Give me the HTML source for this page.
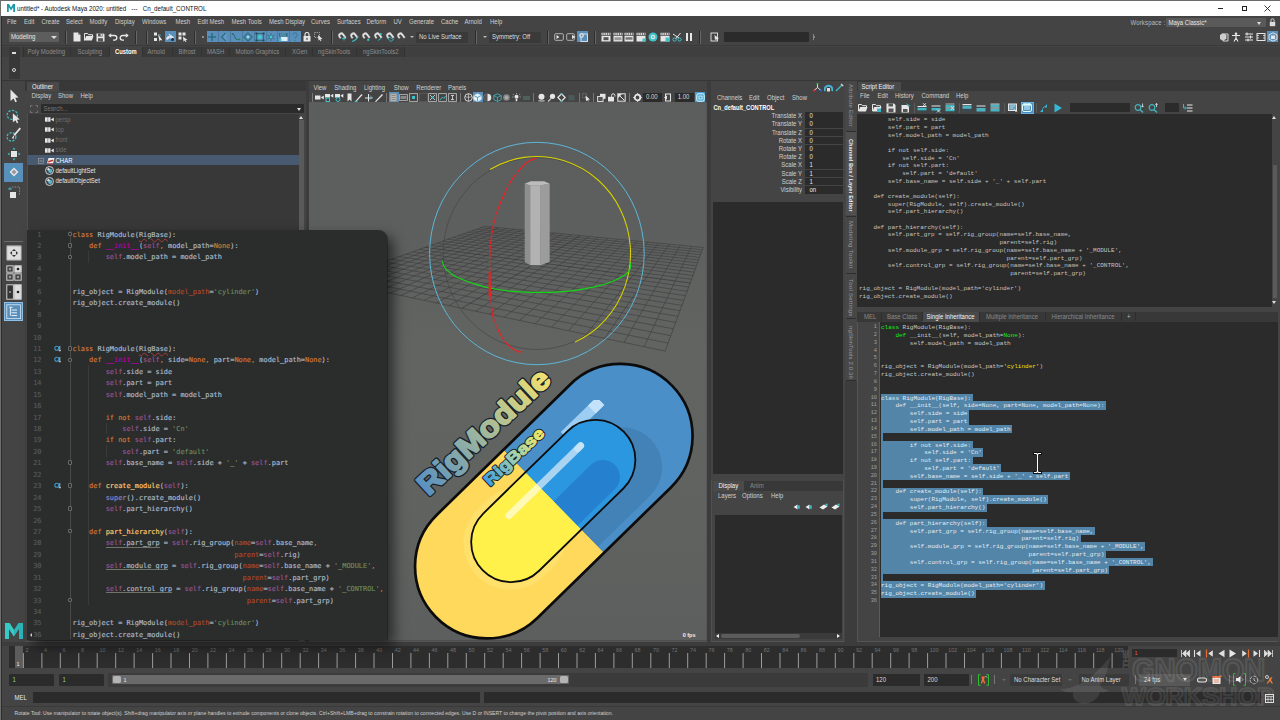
<!DOCTYPE html>
<html lang="en">
<head>
<meta charset="utf-8">
<title>untitled* - Autodesk Maya 2020: untitled --- Cn_default_CONTROL</title>
<style>
*{box-sizing:border-box;margin:0;padding:0}
html,body{width:1280px;height:720px;overflow:hidden;background:#444}
body{font-family:"Liberation Sans",sans-serif;font-size:6px;color:#d0d0d0;position:relative;-webkit-font-smoothing:antialiased}
.abs,.abs>*{position:absolute}
.a{position:absolute}
.t{position:absolute;white-space:pre;line-height:10px;height:10px;transform:scaleY(1.13);transform-origin:0 50%}
.dim{color:#8a8a8a}
.fld{position:absolute;background:#2b2b2b;border-radius:1px}
.sep{position:absolute;width:1px;background:#2a2a2a;box-shadow:1px 0 0 #5a5a5a}
.ic{position:absolute;width:11px;height:11px}
.mono{font-family:"Liberation Mono",monospace}
.pc{font-family:"DejaVu Sans Mono","Liberation Mono",monospace;-webkit-text-stroke:.18px}
</style>
</head>
<body>
<div class="a" style="left:0;top:0;width:1280px;height:16px;background:#fff"></div>
<div class="a" style="left:0;top:0;width:1280px;height:1px;background:#6b6b6b"></div>
<div class="a" style="left:0;top:0;width:1.400px;height:720px;background:#6e6e6e;z-index:50"></div>
<div class="a" style="left:1.400px;top:16px;width:1px;height:704px;background:#2c2c2c;z-index:50"></div>
<svg class="a" style="left:7px;top:4px" width="8" height="8" viewBox="0 0 8 8"><path d="M0 0h2l2 3.4L6 0h2v8H6.2V3.2L4 6.6 1.8 3.2V8H0z" fill="#1c9aa8"/></svg>
<div class="t" style="left:17px;top:3.900px;color:#111;font-size:7px;transform:scaleX(.885);transform-origin:0 0">untitled* - Autodesk Maya 2020: untitled&nbsp;&nbsp;&nbsp;---&nbsp;&nbsp;&nbsp;Cn_default_CONTROL</div>
<div class="a" style="left:1218px;top:8px;width:5px;height:1px;background:#222"></div>
<div class="a" style="left:1241.500px;top:5.500px;width:5.500px;height:5.500px;border:.8px solid #222"></div>
<svg class="a" style="left:1263.500px;top:4.500px" width="7" height="7" viewBox="0 0 7 7"><path d="M.5 .5l6 6M6.500 .5l-6 6" stroke="#222" stroke-width=".9" fill="none"/></svg>
<div class="t" style="left:7px;top:16.8px">File</div>
<div class="t" style="left:24px;top:16.8px">Edit</div>
<div class="t" style="left:41.5px;top:16.8px">Create</div>
<div class="t" style="left:66px;top:16.8px">Select</div>
<div class="t" style="left:89.5px;top:16.8px">Modify</div>
<div class="t" style="left:115px;top:16.8px">Display</div>
<div class="t" style="left:142px;top:16.8px">Windows</div>
<div class="t" style="left:175.5px;top:16.8px">Mesh</div>
<div class="t" style="left:197.5px;top:16.8px">Edit Mesh</div>
<div class="t" style="left:231.5px;top:16.8px">Mesh Tools</div>
<div class="t" style="left:269px;top:16.8px">Mesh Display</div>
<div class="t" style="left:311px;top:16.8px">Curves</div>
<div class="t" style="left:337px;top:16.8px">Surfaces</div>
<div class="t" style="left:366.5px;top:16.8px">Deform</div>
<div class="t" style="left:393.5px;top:16.8px">UV</div>
<div class="t" style="left:409px;top:16.8px">Generate</div>
<div class="t" style="left:441px;top:16.8px">Cache</div>
<div class="t" style="left:464.5px;top:16.8px">Arnold</div>
<div class="t" style="left:490px;top:16.8px">Help</div>
<div class="t" style="left:1130.500px;top:17.800px;color:#bbb;letter-spacing:.15px">Workspace :</div>
<div class="fld" style="left:1166px;top:18.200px;width:99.500px;height:9.300px;background:#5a5a5a"></div>
<div class="t" style="left:1168.500px;top:17.900px;color:#e8e8e8">Maya Classic*</div>
<div class="a" style="left:1257px;top:22px;border:2.600px solid transparent;border-top:3.5px solid #ddd"></div>
<svg class="a" style="left:1268.500px;top:18.200px" width="7" height="8.600" viewBox="0 0 9 11"><rect x="1" y="5" width="7" height="5.5" fill="#ddd"/><path d="M2.5 5V3a2 2 0 014 0v2" stroke="#ddd" stroke-width="1.2" fill="none"/></svg>
<div class="fld" style="left:9px;top:32px;width:50px;height:10px;background:#5d5d5d"></div>
<div class="t" style="left:11px;top:32px;color:#e8e8e8">Modeling</div>
<div class="a" style="left:50.5px;top:35.5px;border:3px solid transparent;border-top:3.5px solid #ddd"></div>
<div class="a" style="left:65px;top:31px;width:1px;height:13px;background:#2c2c2c"></div><div class="a" style="left:66px;top:31px;width:1px;height:13px;background:#666"></div>
<svg class="a" style="left:72.5px;top:32.0px" width="8" height="10" viewBox="0 0 8 10"><path d="M.5 .5h4.5l2.5 2.5v6.5h-7z" fill="#e6e6e6"/><path d="M5 .5v2.5h2.5" fill="#999"/></svg>
<svg class="a" style="left:83.5px;top:33.0px" width="10" height="8" viewBox="0 0 10 8"><path d="M.5 7.5v-7h3l1 1.2h4v1.3" fill="none" stroke="#e6e6e6" stroke-width="1"/><path d="M.5 7.5l1.6-4.5h7.4l-1.6 4.5z" fill="#e6e6e6"/></svg>
<svg class="a" style="left:96.0px;top:32.5px" width="9" height="9" viewBox="0 0 9 9"><path d="M.5 .5h7l1 1v7h-8z" fill="#e6e6e6"/><rect x="2" y=".5" width="4.5" height="3" fill="#555"/><rect x="4.6" y="1" width="1.2" height="2" fill="#e6e6e6"/><rect x="2" y="5.2" width="5" height="3.3" fill="#555"/></svg>
<svg class="a" style="left:107.5px;top:33.0px" width="10" height="8" viewBox="0 0 10 8"><path d="M1 2.5h5.5a2.3 2.3 0 010 4.6h-1.5" fill="none" stroke="#e6e6e6" stroke-width="1.4"/><path d="M3.2 .3L.3 2.5l2.9 2.2z" fill="#e6e6e6"/></svg>
<svg class="a" style="left:119.0px;top:33.0px" width="10" height="8" viewBox="0 0 10 8"><path d="M9 2.5h-5.500a2.3 2.3 0 000 4.6h1.5" fill="none" stroke="#e6e6e6" stroke-width="1.4"/><path d="M6.800 .3l2.9 2.2-2.900 2.200z" fill="#e6e6e6"/></svg>
<div class="a" style="left:134.5px;top:31px;width:1px;height:13px;background:#2c2c2c"></div><div class="a" style="left:135.5px;top:31px;width:1px;height:13px;background:#666"></div>
<div class="a" style="left:146px;top:31px;width:1px;height:13px;background:#2c2c2c"></div><div class="a" style="left:147px;top:31px;width:1px;height:13px;background:#666"></div>
<svg class="a" style="left:152.5px;top:32.0px" width="10" height="10" viewBox="0 0 10 10"><rect x="1" y=".5" width="3" height="3" fill="#e6e6e6"/><rect x="1" y="6" width="3" height="3" fill="#e6e6e6"/><path d="M5 2l4.500 6.500-2-.4-.9 1.700z" fill="#e6e6e6"/><path d="M5.500 2.500l2.500 1" stroke="#3fc1c9" stroke-width=".8"/></svg>
<div class="a" style="left:164.5px;top:31.3px;width:11.5px;height:11px;background:#5a8fbc"></div>
<svg class="a" style="left:165.2px;top:32.0px" width="10" height="10" viewBox="0 0 10 10"><path d="M2 8a2.200 2.200 0 113.500-2.600z" fill="#e6e6e6"/><path d="M3.500 1.500l3 7 .6-2.500 2.400-.6z" fill="#e6e6e6"/><circle cx="7.500" cy="7.500" r="1.500" fill="#2b2b2b"/></svg>
<svg class="a" style="left:177.5px;top:32.0px" width="10" height="10" viewBox="0 0 10 10"><rect x=".5" y=".5" width="3" height="3" fill="#e6e6e6"/><rect x="4.500" y=".5" width="3" height="3" fill="#e6e6e6"/><rect x=".5" y="4.500" width="3" height="3" fill="#e6e6e6"/><path d="M5 4.500l4.500 3.500-2 .2.900 1.700-.8.300-.9-1.700-1.200 1.300z" fill="#e6e6e6"/></svg>
<div class="a" style="left:193.5px;top:31px;width:1px;height:13px;background:#2c2c2c"></div><div class="a" style="left:194.5px;top:31px;width:1px;height:13px;background:#666"></div>
<div class="a" style="left:201.5px;top:36px;width:2px;height:2px;border-radius:1px;background:#aaa"></div>
<div class="a" style="left:206.5px;top:31.3px;width:94.3px;height:11px;background:#5a8fbc"></div>
<svg class="a" style="left:207.4px;top:32.0px" width="10" height="10" viewBox="0 0 10 10"><path d="M1 5h8M5 1v8" stroke="#2b6f80" stroke-width="1.500"/></svg>
<div class="a" style="left:218.3px;top:31.3px;width:.6px;height:11px;background:#4a7a9f"></div>
<svg class="a" style="left:219.2px;top:32.0px" width="10" height="10" viewBox="0 0 10 10"><path d="M6.500 1l-4 4 4 4" stroke="#2b6f80" stroke-width="1.100" fill="none"/><path d="M7.500 2.500l-2 2.500 2 2.500" stroke="#7fb0d0" stroke-width=".8" fill="none"/></svg>
<div class="a" style="left:230.1px;top:31.3px;width:.6px;height:11px;background:#4a7a9f"></div>
<svg class="a" style="left:231.0px;top:32.0px" width="10" height="10" viewBox="0 0 10 10"><path d="M1.500 2c3 0 1.500 5.500 4.500 5.500h2.500" stroke="#2b6f80" stroke-width="1.100" fill="none"/><rect x=".8" y="1.200" width="1.800" height="1.800" fill="#2b6f80"/><rect x="7.500" y="6.500" width="1.800" height="1.800" fill="#2a8a3a"/></svg>
<div class="a" style="left:241.9px;top:31.3px;width:.6px;height:11px;background:#4a7a9f"></div>
<svg class="a" style="left:242.8px;top:32.0px" width="10" height="10" viewBox="0 0 10 10"><path d="M5 .8l4.200 4.200-4.200 4.200-4.200-4.200z" fill="none" stroke="#2b6f80" stroke-width="1.100"/><circle cx="5" cy="5" r="1.300" fill="#9fe0e0"/></svg>
<div class="a" style="left:253.7px;top:31.3px;width:.6px;height:11px;background:#4a7a9f"></div>
<svg class="a" style="left:254.6px;top:32.0px" width="10" height="10" viewBox="0 0 10 10"><rect x="1.500" y="1.500" width="7" height="7" fill="none" stroke="#2b6f80" stroke-width="1"/><circle cx="5" cy="5" r="2" fill="#3fd0d0"/><rect x=".5" y=".5" width="2" height="2" fill="#2a4a5a"/><rect x="7.500" y=".5" width="2" height="2" fill="#2a4a5a"/><rect x=".5" y="7.500" width="2" height="2" fill="#2a4a5a"/><rect x="7.500" y="7.500" width="2" height="2" fill="#2a4a5a"/></svg>
<div class="a" style="left:265.5px;top:31.3px;width:.6px;height:11px;background:#4a7a9f"></div>
<svg class="a" style="left:266.4px;top:32.0px" width="10" height="10" viewBox="0 0 10 10"><path d="M5 1v8M1.500 3l7 4M8.500 3l-7 4" stroke="#2b6f80" stroke-width=".9"/><circle cx="5" cy="5" r="1.200" fill="#3fd0d0"/></svg>
<div class="a" style="left:277.3px;top:31.3px;width:.6px;height:11px;background:#4a7a9f"></div>
<svg class="a" style="left:278.2px;top:32.0px" width="10" height="10" viewBox="0 0 10 10"><rect x="1" y="1" width="8.500" height="3.500" fill="#2b6f80"/><path d="M3 1v3.500M5 1v3.500M7 1v3.500" stroke="#8fc0dd" stroke-width=".7"/><rect x="3" y="5" width="6.500" height="4" fill="#dfeff5"/><circle cx="2.500" cy="8" r="1.300" fill="#3fd0d0"/></svg>
<div class="a" style="left:289.1px;top:31.3px;width:.6px;height:11px;background:#4a7a9f"></div>
<svg class="a" style="left:290.0px;top:32.0px" width="10" height="10" viewBox="0 0 10 10"><path d="M3 3.200a2.100 2.100 0 114 .6c-.5 1-2 1.200-2 2.700" stroke="#3a7f9f" stroke-width="1.200" fill="none"/><rect x="4.400" y="7.800" width="1.300" height="1.300" fill="#3a7f9f"/></svg>
<svg class="a" style="left:302.8px;top:32.0px" width="8" height="10" viewBox="0 0 8 10"><rect x=".5" y="4" width="7" height="5.500" rx=".5" fill="#e6e6e6"/><path d="M2 4.200v-1.700a2 2 0 014 0v1.700" fill="none" stroke="#e6e6e6" stroke-width="1.200"/><rect x="3.400" y="5.800" width="1.200" height="2" fill="#444"/></svg>
<svg class="a" style="left:313.8px;top:32.0px" width="10" height="10" viewBox="0 0 10 10"><rect x=".5" y=".5" width="5" height="5" fill="none" stroke="#bdbdbd" stroke-width=".8" stroke-dasharray="1.200 1"/><path d="M4 3l4.500 4-2 .2.900 1.700-.8.300-.9-1.700-1.200 1.300z" fill="#e6e6e6"/></svg>
<div class="a" style="left:330.5px;top:31px;width:1px;height:13px;background:#2c2c2c"></div><div class="a" style="left:331.5px;top:31px;width:1px;height:13px;background:#666"></div>
<svg class="a" style="left:337.0px;top:31.5px" width="11" height="11" viewBox="0 0 11 11"><path d="M1.800 5.200a3 3 0 015-3.400l2.600 3.400-1.500 1.200-2.600-3.300a1.100 1.100 0 00-1.900 1.300l1 1.300-1.500 1.100z" fill="#e6e6e6" stroke="#777" stroke-width=".3"/><path d="M5 6.500h4M7 4.500v4" stroke="#3fc1c9" stroke-width=".9"/></svg>
<svg class="a" style="left:349.0px;top:31.5px" width="11" height="11" viewBox="0 0 11 11"><path d="M1.800 5.200a3 3 0 015-3.400l2.600 3.400-1.500 1.200-2.600-3.300a1.100 1.100 0 00-1.900 1.300l1 1.300-1.500 1.100z" fill="#e6e6e6" stroke="#777" stroke-width=".3"/><path d="M3 9.500c2-.5 4.500-2 6-5" stroke="#3fc1c9" stroke-width="1.100" fill="none"/></svg>
<svg class="a" style="left:360.5px;top:31.5px" width="11" height="11" viewBox="0 0 11 11"><path d="M1.800 5.200a3 3 0 015-3.400l2.600 3.400-1.500 1.200-2.600-3.300a1.100 1.100 0 00-1.900 1.300l1 1.300-1.500 1.100z" fill="#e6e6e6" stroke="#777" stroke-width=".3"/><rect x="6.200" y="6.800" width="2" height="2" fill="#3fc1c9"/></svg>
<svg class="a" style="left:372.5px;top:31.5px" width="11" height="11" viewBox="0 0 11 11"><path d="M1.800 5.200a3 3 0 015-3.400l2.600 3.400-1.500 1.200-2.600-3.300a1.100 1.100 0 00-1.900 1.300l1 1.300-1.500 1.100z" fill="#e6e6e6" stroke="#777" stroke-width=".3"/><circle cx="7.800" cy="2.200" r="1.100" fill="#3fc1c9"/><path d="M5 8.500l3-2" stroke="#3fc1c9" stroke-width=".8"/></svg>
<svg class="a" style="left:384.5px;top:31.5px" width="11" height="11" viewBox="0 0 11 11"><path d="M1.800 5.200a3 3 0 015-3.400l2.600 3.400-1.500 1.200-2.600-3.300a1.100 1.100 0 00-1.900 1.300l1 1.300-1.500 1.100z" fill="#e6e6e6" stroke="#777" stroke-width=".3"/><path d="M4.500 5l4 2.500-2.500 2-3-2.800z" fill="none" stroke="#3fc1c9" stroke-width=".8"/></svg>
<svg class="a" style="left:396.0px;top:31.5px" width="11" height="11" viewBox="0 0 11 11"><path d="M1.800 5.200a3 3 0 015-3.400l2.600 3.400-1.500 1.200-2.600-3.300a1.100 1.100 0 00-1.900 1.300l1 1.300-1.500 1.100z" fill="#e6e6e6" stroke="#777" stroke-width=".3"/></svg>
<div class="a" style="left:409.5px;top:36.0px;border:2px solid transparent;border-top:2.5px solid #bbb;border-bottom:0"></div>
<div class="fld" style="left:416px;top:32px;width:52px;height:10.500px;background:#3a3a3a"></div>
<div class="t" style="left:419px;top:32px;color:#ddd">No Live Surface</div>
<div class="a" style="left:474.5px;top:31px;width:1px;height:13px;background:#2c2c2c"></div><div class="a" style="left:475.5px;top:31px;width:1px;height:13px;background:#666"></div>
<div class="a" style="left:482.5px;top:36.0px;border:2px solid transparent;border-top:2.5px solid #bbb;border-bottom:0"></div>
<div class="fld" style="left:489px;top:32px;width:51.500px;height:10.500px;background:#3a3a3a"></div>
<div class="t" style="left:492px;top:32px;color:#ddd">Symmetry: Off</div>
<div class="a" style="left:546.5px;top:31px;width:1px;height:13px;background:#2c2c2c"></div><div class="a" style="left:547.5px;top:31px;width:1px;height:13px;background:#666"></div>
<svg class="a" style="left:553.5px;top:32.0px" width="10" height="10" viewBox="0 0 10 10"><rect x=".7" y="1.700" width="8.600" height="6.600" rx="1" fill="none" stroke="#bdbdbd" stroke-width=".9"/><path d="M2.500 3l3 2-3 2z" fill="#e6e6e6"/></svg>
<svg class="a" style="left:565.5px;top:32.0px" width="10" height="10" viewBox="0 0 10 10"><rect x=".7" y="1.700" width="7.600" height="6.600" rx="1" fill="none" stroke="#bdbdbd" stroke-width=".9"/><path d="M6 3l3.500 2-3.500 2z" fill="#e6e6e6"/></svg>
<div class="a" style="left:576.5px;top:31.3px;width:11.5px;height:11px;background:#5a8fbc"></div>
<svg class="a" style="left:577.5px;top:32.0px" width="10" height="10" viewBox="0 0 10 10"><rect x="3" y="2" width="6.500" height="7.500" fill="none" stroke="#e6e6e6" stroke-width=".9"/><circle cx="3.500" cy="3.500" r="2.300" fill="#e6e6e6"/><circle cx="3.500" cy="3.500" r="1" fill="#5285a6"/></svg>
<div class="a" style="left:593.5px;top:31px;width:1px;height:13px;background:#2c2c2c"></div><div class="a" style="left:594.5px;top:31px;width:1px;height:13px;background:#666"></div>
<svg class="a" style="left:600.5px;top:32.0px" width="10" height="10" viewBox="0 0 10 10"><rect x=".5" y="3.800" width="9" height="5.700" fill="#e6e6e6"/><path d="M.5 .8h9v2.300h-9z" fill="#e6e6e6"/><path d="M2 .8v2.300M4.200 .8v2.300M6.400 .8v2.300M8.300 .8v2.300" stroke="#444" stroke-width=".8"/><rect x="2.500" y="5.200" width="5" height="3" fill="#555"/></svg>
<svg class="a" style="left:612.5px;top:32.0px" width="10" height="10" viewBox="0 0 10 10"><rect x=".5" y="3.800" width="9" height="5.700" fill="#e6e6e6"/><path d="M.5 .8h9v2.300h-9z" fill="#e6e6e6"/><path d="M2 .8v2.300M4.200 .8v2.300M6.400 .8v2.300M8.300 .8v2.300" stroke="#444" stroke-width=".8"/><rect x="1.500" y="5.200" width="7" height="3" fill="#999"/></svg>
<svg class="a" style="left:624.0px;top:32.0px" width="10" height="10" viewBox="0 0 10 10"><rect x=".5" y="3.800" width="9" height="5.700" fill="#e6e6e6"/><path d="M.5 .8h9v2.300h-9z" fill="#e6e6e6"/><path d="M2 .8v2.300M4.200 .8v2.300M6.400 .8v2.300M8.300 .8v2.300" stroke="#444" stroke-width=".8"/><rect x="1.500" y="5.200" width="7" height="2.500" fill="#777"/></svg>
<svg class="a" style="left:636.0px;top:32.0px" width="10" height="10" viewBox="0 0 10 10"><rect x=".5" y="3.800" width="9" height="5.700" fill="#e6e6e6"/><path d="M.5 .8h9v2.300h-9z" fill="#e6e6e6"/><path d="M2 .8v2.300M4.200 .8v2.300M6.400 .8v2.300M8.300 .8v2.300" stroke="#444" stroke-width=".8"/><circle cx="8" cy="8" r="1.800" fill="#3fc1c9"/></svg>
<svg class="a" style="left:648.0px;top:32.0px" width="10" height="10" viewBox="0 0 10 10"><circle cx="5" cy="5" r="4.500" fill="#3fc1c9"/><circle cx="5" cy="5" r="2.300" fill="#e6e6e6"/><circle cx="5" cy="5" r="1" fill="#3fc1c9"/></svg>
<svg class="a" style="left:660.0px;top:32.0px" width="10" height="10" viewBox="0 0 10 10"><rect x=".5" y="3.800" width="9" height="5.700" fill="#e6e6e6"/><path d="M.5 .8h9v2.300h-9z" fill="#e6e6e6"/><path d="M2 .8v2.300M4.200 .8v2.300M6.400 .8v2.300M8.300 .8v2.300" stroke="#444" stroke-width=".8"/><rect x="5.500" y="5.500" width="4" height="4" fill="#3fc1c9"/></svg>
<svg class="a" style="left:672.0px;top:32.0px" width="10" height="10" viewBox="0 0 10 10"><path d="M1 2l6 4M8.500 1l-5 6" stroke="#e6e6e6" stroke-width="1"/><circle cx="2.500" cy="7.500" r="1.600" fill="none" stroke="#3fc1c9" stroke-width="1"/><circle cx="7.500" cy="7.500" r="1.600" fill="none" stroke="#3fc1c9" stroke-width="1"/></svg>
<svg class="a" style="left:684.5px;top:32.0px" width="8" height="10" viewBox="0 0 8 10"><rect x="1" y="1" width="2" height="8" fill="#e6e6e6"/><rect x="5" y="1" width="2" height="8" fill="#e6e6e6"/></svg>
<div class="a" style="left:698.5px;top:31px;width:1px;height:13px;background:#2c2c2c"></div><div class="a" style="left:699.5px;top:31px;width:1px;height:13px;background:#666"></div>
<svg class="a" style="left:710.0px;top:32.0px" width="10" height="10" viewBox="0 0 10 10"><rect x="1" y="1" width="6.500" height="8" fill="none" stroke="#e6e6e6" stroke-width=".9"/><path d="M4.500 3l4.500 3.500-2 .2.800 1.600-.8.300-.8-1.600-1.200 1.200z" fill="#e6e6e6"/></svg>
<div class="fld" style="left:724px;top:32px;width:85px;height:9.800px;background:#2b2b2b"></div>
<div class="a" style="left:813px;top:34px;width:1px;height:6px;background:#888"></div><div class="a" style="left:814px;top:36px;width:1px;height:2px;background:#888"></div>
<svg class="a" style="left:1218.5px;top:32.0px" width="10" height="10" viewBox="0 0 10 10"><path d="M1 3l3-2 3 2v4l-3 2-3-2z" fill="#ccc"/><path d="M5 2h4v7h-5" fill="none" stroke="#e6e6e6" stroke-width=".9"/><path d="M6 4h2M6 6h2" stroke="#e6e6e6" stroke-width=".7"/></svg>
<svg class="a" style="left:1230.5px;top:32.0px" width="10" height="10" viewBox="0 0 10 10"><circle cx="5" cy="1.800" r="1.300" fill="#e6e6e6"/><path d="M1 3.500h8M5 3.500v3M5 6l-2 3.500M5 6l2 3.500" stroke="#e6e6e6" stroke-width="1.100" fill="none"/></svg>
<svg class="a" style="left:1244.0px;top:32.0px" width="10" height="10" viewBox="0 0 10 10"><path d="M1 2h8M1 5h8M1 8h8" stroke="#e6e6e6" stroke-width="1.100"/><path d="M3 .5v3M6.500 3.500v3M4 6.500v3" stroke="#e6e6e6" stroke-width="1.100"/></svg>
<svg class="a" style="left:1255.5px;top:32.0px" width="10" height="10" viewBox="0 0 10 10"><rect x="1" y="1.500" width="8" height="7" fill="none" stroke="#e6e6e6" stroke-width="1"/><path d="M1 3.500h2M1 6h2M7 3.500h2M7 6h2" stroke="#e6e6e6" stroke-width=".8"/></svg>
<div class="a" style="left:1266.5px;top:31.3px;width:11.5px;height:11px;background:#5a8fbc"></div>
<svg class="a" style="left:1267.5px;top:32.0px" width="10" height="10" viewBox="0 0 10 10"><path d="M5 .8l4 2v4.400l-4 2-4-2v-4.400z" fill="none" stroke="#e6e6e6" stroke-width=".9"/><rect x="3" y="3.500" width="4" height="3.500" fill="#e6e6e6"/></svg>
<div class="a" style="left:2px;top:46.5px;width:1278px;height:10.3px;background:#3f3f3f;"></div>
<div class="a" style="left:22px;top:46.5px;width:382.5px;height:10.3px;background:#3a3a3a;"></div>
<div class="a" style="left:2px;top:45.3px;width:1278px;height:1.2px;background:#3a3a3a;"></div>
<div class="a" style="left:9px;top:46.5px;width:10.5px;height:32px;background:#383838;"></div>
<div class="a" style="left:11.5px;top:52px;width:4px;height:1.6px;background:#ddd;"></div>
<div class="a" style="left:11.700px;top:67.500px;width:4px;height:4px;border:1px solid #ddd;border-radius:2px"></div>
<div class="a" style="left:109px;top:46.5px;width:32.5px;height:10.5px;background:#444;"></div>
<div class="t" style="left:27.5px;top:47.3px;color:#8e8e8e">Poly Modeling</div>
<div class="t" style="left:77.5px;top:47.3px;color:#8e8e8e">Sculpting</div>
<div class="t" style="left:115px;top:47.3px;color:#fff;font-weight:bold;font-size:5.800px">Custom</div>
<div class="t" style="left:147.5px;top:47.3px;color:#8e8e8e">Arnold</div>
<div class="t" style="left:178.5px;top:47.3px;color:#8e8e8e">Bifrost</div>
<div class="t" style="left:207px;top:47.3px;color:#8e8e8e">MASH</div>
<div class="t" style="left:235.5px;top:47.3px;color:#8e8e8e">Motion Graphics</div>
<div class="t" style="left:292px;top:47.3px;color:#8e8e8e">XGen</div>
<div class="t" style="left:318px;top:47.3px;color:#8e8e8e">ngSkinTools</div>
<div class="t" style="left:363px;top:47.3px;color:#8e8e8e">ngSkinTools2</div>
<div class="a" style="left:22.5px;top:46.5px;width:1px;height:10px;background:#333;"></div>
<div class="a" style="left:70px;top:46.5px;width:1px;height:10px;background:#333;"></div>
<div class="a" style="left:109px;top:46.5px;width:1px;height:10px;background:#333;"></div>
<div class="a" style="left:141.5px;top:46.5px;width:1px;height:10px;background:#333;"></div>
<div class="a" style="left:172px;top:46.5px;width:1px;height:10px;background:#333;"></div>
<div class="a" style="left:200.5px;top:46.5px;width:1px;height:10px;background:#333;"></div>
<div class="a" style="left:229px;top:46.5px;width:1px;height:10px;background:#333;"></div>
<div class="a" style="left:285px;top:46.5px;width:1px;height:10px;background:#333;"></div>
<div class="a" style="left:311.5px;top:46.5px;width:1px;height:10px;background:#333;"></div>
<div class="a" style="left:356px;top:46.5px;width:1px;height:10px;background:#333;"></div>
<div class="a" style="left:404px;top:46.5px;width:1px;height:10px;background:#333;"></div>
<div class="a" style="left:2px;top:79.5px;width:1278px;height:1.5px;background:#363636;"></div>
<svg class="a" style="left:8.5px;top:89.0px" width="10" height="14" viewBox="0 0 10 14"><path d="M1.500 .5l8 8-3.300.2 1.700 3.800-1.600.7-1.700-3.800-3.100 2.600z" fill="#e6e6e6"/></svg>
<svg class="a" style="left:6.0px;top:108.0px" width="14.9" height="16.1" viewBox="0 0 13 14"><ellipse cx="5.500" cy="6" rx="4.500" ry="4" fill="none" stroke="#3fc1c9" stroke-width="1.100" stroke-dasharray="2 1.200"/><path d="M6 4.500l6 5.500-2.500.2 1.200 2.600-1.200.5-1.200-2.600-2.300 1.800z" fill="#e6e6e6"/></svg>
<svg class="a" style="left:5.8px;top:127.3px" width="15.4" height="15.4" viewBox="0 0 14 14"><ellipse cx="5" cy="9" rx="4" ry="3.800" fill="none" stroke="#3fc1c9" stroke-width="1.100" stroke-dasharray="2 1.200"/><path d="M13 1l-5.500 6.500" stroke="#e6e6e6" stroke-width="1.600"/><path d="M7.800 6.800l-2.500 3.200 1.500 1z" fill="#e6e6e6"/></svg>
<svg class="a" style="left:6.5px;top:146.5px" width="14" height="14" viewBox="0 0 14 14"><rect x="4" y="4" width="6" height="6" fill="#e6e6e6"/><path d="M7 .5l1.500 2h-3zM7 13.500l1.500-2h-3zM.5 7l2-1.500v3zM13.500 7l-2-1.500v3z" fill="#3fc1c9"/></svg>
<div class="a" style="left:4px;top:163px;width:19px;height:18.5px;background:#5a8fbc;"></div>
<svg class="a" style="left:6.5px;top:165.2px" width="14" height="14" viewBox="0 0 14 14"><circle cx="7" cy="7" r="5.500" fill="none" stroke="#3f9fb5" stroke-width="1"/><path d="M7 2.500l4.500 4.500-4.500 4.500-4.500-4.500z" fill="#e6e6e6"/><path d="M7 4.500l2.500 2.500-2.500 2.500-2.500-2.500z" fill="#999"/></svg>
<svg class="a" style="left:6.5px;top:185.5px" width="14" height="14" viewBox="0 0 14 14"><rect x="3" y="6" width="6" height="6" fill="#e6e6e6"/><path d="M5 1h7.500v7.500" fill="none" stroke="#8a8a8a" stroke-width="1" stroke-dasharray="1.500 1.200"/><path d="M3 1v3M1 3h4" stroke="#3fc1c9" stroke-width=".8"/></svg>
<div class="a" style="left:4px;top:241.2px;width:19px;height:1.2px;background:#6a6a6a;"></div>
<svg class="a" style="left:5.5px;top:245.3px" width="16.0" height="16.0" viewBox="0 0 14 14"><rect x=".5" y=".5" width="13" height="13" rx="1" fill="#ddd" stroke="#888" stroke-width="1"/><path d="M7 3.500l1.800 1.800h-3.600zM7 10.500l1.800-1.800h-3.600zM3.500 7l1.800-1.800v3.600zM10.500 7l-1.800-1.800v3.600z" fill="#333"/></svg>
<svg class="a" style="left:5.5px;top:265.0px" width="16.0" height="16.0" viewBox="0 0 14 14"><rect x=".7" y=".7" width="5.600" height="5.600" fill="none" stroke="#ccc" stroke-width=".9"/><rect x="7.700" y=".7" width="5.600" height="5.600" fill="#ddd" stroke="#ccc" stroke-width=".9"/><rect x=".7" y="7.700" width="5.600" height="5.600" fill="none" stroke="#ccc" stroke-width=".9"/><rect x="7.700" y="7.700" width="5.600" height="5.600" fill="none" stroke="#ccc" stroke-width=".9"/><circle cx="10.500" cy="3.500" r="1.200" fill="#222"/><path d="M3.500 2.500v2M2.500 3.500h2M3.500 9.500v2M2.500 10.500h2M10.500 9.500v2M9.500 10.500h2" stroke="#ccc" stroke-width=".7"/></svg>
<svg class="a" style="left:5.5px;top:284.0px" width="16.0" height="16.0" viewBox="0 0 14 14"><rect x=".7" y=".7" width="5.800" height="12.600" fill="#333" stroke="#ccc" stroke-width=".9"/><rect x="7.500" y=".7" width="5.800" height="12.600" fill="#ddd" stroke="#ccc" stroke-width=".9"/><circle cx="10.500" cy="7" r="1.200" fill="#222"/><circle cx="3.500" cy="7" r=".8" fill="#aaa"/></svg>
<div class="a" style="left:4px;top:302px;width:19px;height:19px;background:#5a8fbc;border:1px solid #8cc0e8"></div>
<svg class="a" style="left:5.8px;top:303.8px" width="15.4" height="15.4" viewBox="0 0 14 14"><rect x=".7" y=".7" width="12.600" height="12.600" fill="none" stroke="#cfe4f5" stroke-width=".8"/><path d="M3 3h3M5 5.500h5M5 8h5M5 10.500h5M4 3v7.500" stroke="#e8f2fa" stroke-width=".9"/></svg>
<svg class="a" style="left:5.0px;top:623.0px" width="18" height="16" viewBox="0 0 18 16"><path d="M0 0h4.500l4.500 7 4.500-7h4.500v16h-4v-10l-5 7.500-5-7.500v10h-4z" fill="#2bb5b8"/><path d="M0 0h4.500l4.500 7v6.500l-5-7.500v10h-4z" fill="#37c9c6"/></svg>
<div class="a" style="left:25px;top:81px;width:281px;height:562px;background:#444;"></div>
<div class="a" style="left:25px;top:81px;width:281px;height:9.5px;background:#383838;"></div>
<div class="a" style="left:27px;top:82px;width:32px;height:8.5px;background:#494949;"></div>
<div class="t" style="left:32px;top:81.5px;color:#f0f0f0">Outliner</div>
<div class="t" style="left:31.5px;top:91.3px;">Display</div>
<div class="t" style="left:58px;top:91.3px;">Show</div>
<div class="t" style="left:80.5px;top:91.3px;">Help</div>
<svg class="a" style="left:29.5px;top:104.5px" width="8" height="8" viewBox="0 0 8 8"><path d="M.5 2.500v-2h2M5.500 .5h2v2M7.500 5.500v2h-2M2.500 7.500h-2v-2" fill="none" stroke="#777" stroke-width=".9"/></svg>
<div class="a" style="left:41px;top:104.3px;width:263px;height:9px;background:#2b2b2b;border-radius:1px"></div>
<div class="t" style="left:43.5px;top:104px;color:#777">Search...</div>
<div class="a" style="left:296.5px;top:107.75px;border:2.5px solid transparent;border-top:3.0px solid #e0e0e0;border-bottom:0"></div>
<div class="a" style="left:27.5px;top:114px;width:271px;height:529px;background:#383838;"></div>
<div class="a" style="left:298.5px;top:114px;width:6px;height:529px;background:#444;"></div>
<div class="a" style="left:299.3px;top:120px;width:4.5px;height:523px;background:#5a5a5a;"></div>
<div class="a" style="left:298.800px;top:115.500px;border:2.700px solid transparent;border-bottom:3px solid #ddd;border-top:0"></div>
<svg class="a" style="left:45.0px;top:117.0px" width="9" height="5" viewBox="0 0 9 5"><rect x="0" y=".3" width="5.500" height="4.400" fill="#e6e6e6"/><path d="M5.800 2.500l3-2v4z" fill="#e6e6e6"/><path d="M2.800 .3v4.400" stroke="#444" stroke-width=".5"/></svg>
<div class="t" style="left:55.5px;top:114.5px;color:#6e6e6e">persp</div>
<svg class="a" style="left:45.0px;top:127.2px" width="9" height="5" viewBox="0 0 9 5"><rect x="0" y=".3" width="5.500" height="4.400" fill="#e6e6e6"/><path d="M5.800 2.500l3-2v4z" fill="#e6e6e6"/><path d="M2.800 .3v4.400" stroke="#444" stroke-width=".5"/></svg>
<div class="t" style="left:55.5px;top:124.69999999999999px;color:#6e6e6e">top</div>
<svg class="a" style="left:45.0px;top:137.5px" width="9" height="5" viewBox="0 0 9 5"><rect x="0" y=".3" width="5.500" height="4.400" fill="#e6e6e6"/><path d="M5.800 2.500l3-2v4z" fill="#e6e6e6"/><path d="M2.800 .3v4.400" stroke="#444" stroke-width=".5"/></svg>
<div class="t" style="left:55.5px;top:135px;color:#6e6e6e">front</div>
<svg class="a" style="left:45.0px;top:147.7px" width="9" height="5" viewBox="0 0 9 5"><rect x="0" y=".3" width="5.500" height="4.400" fill="#e6e6e6"/><path d="M5.800 2.500l3-2v4z" fill="#e6e6e6"/><path d="M2.800 .3v4.400" stroke="#444" stroke-width=".5"/></svg>
<div class="t" style="left:55.5px;top:145.2px;color:#6e6e6e">side</div>
<div class="a" style="left:26.6px;top:114px;width:1px;height:527px;background:#4e4e4e;"></div>
<div class="a" style="left:26.6px;top:155.2px;width:272px;height:10.2px;background:#475a6f;"></div>
<svg class="a" style="left:38.0px;top:157.5px" width="6" height="6" viewBox="0 0 6 6"><rect x=".5" y=".5" width="5" height="5" fill="none" stroke="#999" stroke-width=".7"/><path d="M1.500 3h3" stroke="#bbb" stroke-width=".7"/></svg>
<svg class="a" style="left:45.5px;top:156.5px" width="9" height="8" viewBox="0 0 9 8"><path d="M1 6.500l1.500-5.500h6l-1.500 5.500z" fill="#eee"/><path d="M2 4l5-1.500.3 1.500-5 1.500z" fill="#c0392b"/><path d="M1 6.500h6v1h-6z" fill="#a33"/></svg>
<div class="t" style="left:55.5px;top:155.5px;color:#fff">CHAR</div>
<svg class="a" style="left:45.0px;top:166.3px" width="9" height="9" viewBox="0 0 9 9"><circle cx="4.500" cy="4.500" r="4" fill="#3a4a55" stroke="#eee" stroke-width=".8"/><circle cx="5.300" cy="5" r="2" fill="#58b8d0"/><circle cx="3.500" cy="3.300" r="1.200" fill="#ddd"/></svg>
<div class="t" style="left:55.5px;top:165.8px;color:#e4e4e4">defaultLightSet</div>
<svg class="a" style="left:45.0px;top:176.5px" width="9" height="9" viewBox="0 0 9 9"><circle cx="4.500" cy="4.500" r="4" fill="#3a4a55" stroke="#eee" stroke-width=".8"/><circle cx="5.300" cy="5" r="2" fill="#58b8d0"/><circle cx="3.500" cy="3.300" r="1.200" fill="#ddd"/></svg>
<div class="t" style="left:55.5px;top:176px;color:#e4e4e4">defaultObjectSet</div>
<div class="a" style="left:306px;top:81px;width:3px;height:562px;background:#3c3c3c;"></div>
<div class="a" style="left:309px;top:81px;width:399px;height:562px;background:#444;"></div>
<div class="t" style="left:313.5px;top:82.6px;">View</div>
<div class="t" style="left:334.3px;top:82.6px;">Shading</div>
<div class="t" style="left:364px;top:82.6px;">Lighting</div>
<div class="t" style="left:393.7px;top:82.6px;">Show</div>
<div class="t" style="left:416.3px;top:82.6px;">Renderer</div>
<div class="t" style="left:448px;top:82.6px;">Panels</div>
<div class="a" style="left:312px;top:93px;width:1px;height:9px;background:#777"></div>
<svg class="a" style="left:314.8px;top:92.8px" width="9" height="9" viewBox="0 0 9 9"><rect x="0" y="2.500" width="5.500" height="4" fill="#e6e6e6"/><path d="M5.800 4.500l3-2v4z" fill="#e6e6e6"/></svg>
<svg class="a" style="left:324.8px;top:92.8px" width="9" height="9" viewBox="0 0 9 9"><rect x="0" y="1" width="5" height="3.500" fill="#e6e6e6"/><path d="M5.300 2.700l3-2v4z" fill="#e6e6e6"/><rect x="1" y="5" width="3.500" height="3.500" fill="none" stroke="#3fc1c9" stroke-width="1"/></svg>
<svg class="a" style="left:334.5px;top:92.8px" width="9" height="9" viewBox="0 0 9 9"><rect x="0" y="1" width="5" height="3.500" fill="#e6e6e6"/><path d="M5.300 2.700l3-2v4z" fill="#e6e6e6"/><circle cx="3" cy="6.500" r="2" fill="none" stroke="#3fc1c9" stroke-width="1"/></svg>
<svg class="a" style="left:344.5px;top:92.8px" width="9" height="9" viewBox="0 0 9 9"><path d="M2.500 .5h4v8l-2-2-2 2z" fill="#e6e6e6"/></svg>
<svg class="a" style="left:354.2px;top:92.8px" width="9" height="9" viewBox="0 0 9 9"><path d="M1 8.500l6.500-7.500 1 1-6.500 7z" fill="#e6e6e6"/><path d="M.5 9l3-1" stroke="#3fc1c9" stroke-width="1.200"/></svg>
<svg class="a" style="left:363.8px;top:92.8px" width="9" height="9" viewBox="0 0 9 9"><path d="M4.500 1v7.500M1 5h7.500" stroke="#e6e6e6" stroke-width="1"/><path d="M6 2.500l2 2-2 2" stroke="#3fc1c9" stroke-width=".9" fill="none"/></svg>
<svg class="a" style="left:373.5px;top:92.8px" width="9" height="9" viewBox="0 0 9 9"><path d="M1 8.500l7-7.500 1 1-7 7z" fill="#e6e6e6"/></svg>
<div class="a" style="left:385.5px;top:93px;width:1px;height:9px;background:#777"></div>
<div class="a" style="left:388.7px;top:92.3px;width:10px;height:10px;background:#5a8fbc;"></div>
<svg class="a" style="left:389.2px;top:92.8px" width="9" height="9" viewBox="0 0 9 9"><rect x="1.200" y=".8" width="6.600" height="7.400" fill="#b8b8b8" stroke="#8a8a8a" stroke-width=".6"/><path d="M2.500 2.500h4M2.500 4.500h4M2.500 6.500h4" stroke="#666" stroke-width=".6"/></svg>
<svg class="a" style="left:399.2px;top:92.8px" width="9" height="9" viewBox="0 0 9 9"><rect x=".6" y="1.600" width="7.800" height="5.800" fill="none" stroke="#b4b4b4" stroke-width=".9"/><rect x="1.500" y="3" width="6" height="3" fill="#888"/></svg>
<svg class="a" style="left:408.8px;top:92.8px" width="9" height="9" viewBox="0 0 9 9"><rect x=".6" y=".6" width="7.800" height="7.800" fill="none" stroke="#b4b4b4" stroke-width=".9"/><rect x="3" y="3" width="3" height="3" fill="#3fc1c9"/></svg>
<svg class="a" style="left:418.5px;top:92.8px" width="9" height="9" viewBox="0 0 9 9"><rect x=".6" y=".6" width="7.800" height="7.800" fill="none" stroke="#5a5a5a" stroke-width=".9"/></svg>
<svg class="a" style="left:428.2px;top:92.8px" width="9" height="9" viewBox="0 0 9 9"><rect x=".6" y=".6" width="7.800" height="7.800" fill="none" stroke="#b4b4b4" stroke-width=".9"/><path d="M2 2l5 5M7 2l-5 5" stroke="#e6e6e6" stroke-width=".8"/><rect x="3.500" y="3.500" width="2" height="2" fill="#3fc1c9"/></svg>
<svg class="a" style="left:437.8px;top:92.8px" width="9" height="9" viewBox="0 0 9 9"><rect x=".6" y=".6" width="7.800" height="7.800" fill="none" stroke="#b4b4b4" stroke-width=".9"/><path d="M2 7l2.500-3 1.500 1.500 1.500-2.500" stroke="#3fc1c9" stroke-width=".9" fill="none"/></svg>
<svg class="a" style="left:447.5px;top:92.8px" width="9" height="9" viewBox="0 0 9 9"><rect x=".6" y=".6" width="7.800" height="7.800" fill="none" stroke="#b4b4b4" stroke-width=".9"/><path d="M3 2.500h3M4.500 2.500v4M3 6.500h3" stroke="#e6e6e6" stroke-width=".8"/></svg>
<div class="a" style="left:459.5px;top:93px;width:1px;height:9px;background:#777"></div>
<div class="a" style="left:472.7px;top:92.3px;width:10px;height:10px;background:#5a8fbc;"></div>
<svg class="a" style="left:463.5px;top:92.8px" width="9" height="9" viewBox="0 0 9 9"><circle cx="4.500" cy="4.500" r="3.800" fill="none" stroke="#e6e6e6" stroke-width=".9"/><path d="M4.500 .7v7.600M1 3.500c2 1 5 1 7 0" stroke="#e6e6e6" stroke-width=".6" fill="none"/></svg>
<svg class="a" style="left:473.2px;top:92.8px" width="9" height="9" viewBox="0 0 9 9"><path d="M4.500 .8l3.700 1.800v4l-3.700 1.900-3.700-1.900v-4z" fill="#dff3fa" stroke="#eaf6ff" stroke-width=".6"/><path d="M.8 2.600l3.700 1.800 3.700-1.800M4.500 4.400v4" stroke="#3a7a9a" stroke-width=".7" fill="none"/></svg>
<svg class="a" style="left:482.8px;top:92.8px" width="9" height="9" viewBox="0 0 9 9"><circle cx="4.500" cy="4.500" r="3.800" fill="#e6e6e6"/><path d="M4.500 .7a3.800 3.800 0 000 7.600z" fill="#555"/></svg>
<svg class="a" style="left:492.5px;top:92.8px" width="9" height="9" viewBox="0 0 9 9"><path d="M4.500 .8l3.700 1.800v4l-3.700 1.900-3.700-1.900v-4z" fill="none" stroke="#3fc1c9" stroke-width=".8"/><path d="M.8 2.600l3.700 1.800 3.700-1.800M4.500 4.400v4" stroke="#3fc1c9" stroke-width=".7" fill="none"/></svg>
<svg class="a" style="left:502.2px;top:92.8px" width="9" height="9" viewBox="0 0 9 9"><circle cx="4.500" cy="4.500" r="3.300" fill="#888"/><circle cx="4.500" cy="4.500" r="1.800" fill="#aaa"/></svg>
<svg class="a" style="left:512.2px;top:92.8px" width="9" height="9" viewBox="0 0 9 9"><circle cx="4.500" cy="3.800" r="2" fill="#e6e6e6"/><rect x="3.700" y="6" width="1.600" height="2.200" fill="#e6e6e6"/><path d="M4.500 0v1M1 1.200l.8.800M8 1.200l-.8.800M.3 4h1M7.700 4h1" stroke="#e6e6e6" stroke-width=".6"/></svg>
<svg class="a" style="left:522.2px;top:92.8px" width="9" height="9" viewBox="0 0 9 9"><rect x="1" y="3" width="7" height="4" fill="#4f5f5a"/></svg>
<div class="a" style="left:532.8px;top:93px;width:1px;height:9px;background:#777"></div>
<svg class="a" style="left:537.2px;top:92.8px" width="9" height="9" viewBox="0 0 9 9"><circle cx="4.500" cy="3.800" r="3" fill="#e6e6e6"/><ellipse cx="4.500" cy="7.800" rx="3.500" ry="1" fill="#999"/></svg>
<svg class="a" style="left:547.2px;top:92.8px" width="9" height="9" viewBox="0 0 9 9"><circle cx="5.500" cy="3.300" r="2.600" fill="#e6e6e6"/><path d="M1 8.500l3-3" stroke="#bbb" stroke-width="1.500"/></svg>
<svg class="a" style="left:556.8px;top:92.8px" width="9" height="9" viewBox="0 0 9 9"><path d="M4.500 .8l3.700 3.700-3.700 3.700-3.700-3.700z" fill="none" stroke="#e6e6e6" stroke-width="1.300"/><circle cx="4.500" cy="1" r="1" fill="#3fc1c9"/><circle cx="4.500" cy="8" r="1" fill="#3fc1c9"/></svg>
<svg class="a" style="left:566.8px;top:92.8px" width="9" height="9" viewBox="0 0 9 9"><rect x="1.500" y="2" width="6" height="5.500" fill="#4a5a58"/></svg>
<div class="a" style="left:578.8px;top:93px;width:1px;height:9px;background:#777"></div>
<svg class="a" style="left:582.2px;top:92.8px" width="9" height="9" viewBox="0 0 9 9"><rect x=".6" y=".6" width="4" height="4" fill="none" stroke="#999" stroke-width=".7" stroke-dasharray="1 1"/><path d="M3.500 2.500l4.500 4-2 .2.800 1.600-.8.300-.8-1.600-1.200 1.200z" fill="#e6e6e6"/></svg>
<div class="a" style="left:592.5px;top:93px;width:1px;height:9px;background:#777"></div>
<svg class="a" style="left:597.2px;top:92.8px" width="9" height="9" viewBox="0 0 9 9"><rect x="3" y=".8" width="5.500" height="5" fill="#e6e6e6"/><rect x=".6" y="3.500" width="5.500" height="5" fill="#555" stroke="#e6e6e6" stroke-width=".9"/></svg>
<svg class="a" style="left:606.8px;top:92.8px" width="9" height="9" viewBox="0 0 9 9"><rect x="1" y="3.800" width="6" height="4.700" fill="#e6e6e6"/><path d="M4.500 3.800v-1.300a1.700 1.700 0 013.400 0v1" fill="none" stroke="#e6e6e6" stroke-width="1"/></svg>
<svg class="a" style="left:616.5px;top:92.8px" width="9" height="9" viewBox="0 0 9 9"><rect x=".8" y=".8" width="7.400" height="7.400" fill="none" stroke="#e6e6e6" stroke-width="1"/><path d="M1.500 1.500l6 6" stroke="#e6e6e6" stroke-width="1"/><path d="M1 1h4l-4 4z" fill="#e6e6e6"/></svg>
<div class="a" style="left:628.5px;top:93px;width:1px;height:9px;background:#777"></div>
<svg class="a" style="left:632.5px;top:92.8px" width="9" height="9" viewBox="0 0 9 9"><circle cx="4.500" cy="4.500" r="2.800" fill="none" stroke="#e6e6e6" stroke-width="1.800"/><path d="M4.500 .2v1.500M4.500 7.300v1.500M.2 4.500h1.500M7.300 4.500h1.500" stroke="#e6e6e6" stroke-width="1.200"/></svg>
<div class="a" style="left:643.3px;top:92.8px;width:18.5px;height:9px;background:#2b2b2b;"></div>
<div class="t" style="left:646px;top:92.3px;color:#ddd">0.00</div>
<svg class="a" style="left:663.8px;top:92.8px" width="9" height="9" viewBox="0 0 9 9"><rect x="1.500" y="1" width="5" height="7" fill="none" stroke="#e6e6e6" stroke-width="1"/><path d="M0 4.500l3-2v4z" fill="#e6e6e6"/></svg>
<div class="a" style="left:675px;top:92.8px;width:18.5px;height:9px;background:#2b2b2b;"></div>
<div class="t" style="left:677.7px;top:92.3px;color:#ddd">1.00</div>
<div class="a" style="left:695px;top:92.3px;width:10px;height:10px;background:#4a9fd0;"></div>
<svg class="a" style="left:695.5px;top:92.8px" width="9" height="9" viewBox="0 0 9 9"><rect x=".8" y=".8" width="7.400" height="7.400" rx="1.500" fill="none" stroke="#dff" stroke-width="1"/><path d="M2.500 3h4M2.500 6h4M3 3v3M6 3v3" stroke="#dff" stroke-width=".8"/></svg>
<svg class="a" style="left:309.3px;top:102.3px" width="397.7" height="538.4" viewBox="309.3 102.3 397.7 538.4">
<defs><linearGradient id="vbg" x1="0" y1="0" x2="0" y2="1"><stop offset="0" stop-color="#5c5e5d"/><stop offset=".22" stop-color="#5d5f5e"/><stop offset=".45" stop-color="#626462"/><stop offset=".7" stop-color="#616361"/><stop offset="1" stop-color="#5d5f5e"/></linearGradient></defs>
<rect x="309.3" y="102.3" width="397.7" height="538.4" fill="url(#vbg)"/>
<path d="M331.0 281.0L665.5 351.4M331.0 281.0L485.0 226.6M341.0 277.5L668.4 343.4M340.1 282.9L492.1 227.3M350.5 274.1L671.1 336.0M349.6 284.9L499.4 228.0M359.5 270.9L673.7 329.1M359.3 287.0L506.9 228.7M368.2 267.9L676.0 322.7M369.3 289.1L514.4 229.5M376.5 264.9L678.2 316.7M379.6 291.2L522.1 230.2M384.4 262.1L680.3 311.0M390.3 293.5L530.0 231.0M392.0 259.5L682.3 305.7M401.3 295.8L538.0 231.7M399.3 256.9L684.1 300.7M412.7 298.2L546.2 232.5M406.2 254.4L685.8 296.0M424.5 300.7L554.5 233.3M413.0 252.1L687.5 291.5M436.7 303.2L563.0 234.2M419.4 249.8L689.0 287.3M449.3 305.9L571.7 235.0M431.6 245.5L691.9 279.5M475.9 311.5L589.7 236.8M437.3 243.4L693.2 275.9M489.9 314.4L598.9 237.7M442.9 241.5L694.4 272.5M504.5 317.5L608.4 238.6M448.2 239.6L695.6 269.2M519.6 320.7L618.0 239.5M453.4 237.8L696.8 266.1M535.3 324.0L627.9 240.5M458.3 236.0L697.9 263.1M551.7 327.4L638.0 241.4M463.2 234.3L698.9 260.3M568.7 331.0L648.3 242.4M467.8 232.7L699.9 257.6M586.5 334.8L658.8 243.5M472.3 231.1L700.9 255.0M604.9 338.7L669.6 244.5M476.7 229.5L701.8 252.5M624.3 342.7L680.6 245.6M480.9 228.0L702.7 250.1M644.4 347.0L691.9 246.7M485.0 226.6L703.5 247.8M665.5 351.4L703.5 247.8" stroke="#404040" stroke-width=".7" fill="none"/>
<path d="M425.6 247.6L690.5 283.3M462.3 308.6L580.6 235.9" stroke="#363636" stroke-width=".7" fill="none"/>
<ellipse cx="537.2" cy="253.8" rx="93.700" ry="96" fill="none" stroke="#454545" stroke-width=".7"/>
<ellipse cx="537.2" cy="253.8" rx="107.300" ry="111.200" fill="none" stroke="#5cb6d8" stroke-width="1"/>
<path d="M525 184v78l5.500 3.500v-80z" fill="#8e8e8e"/><path d="M530.500 185.500v80h10.500v-80z" fill="#b2b2b2"/><path d="M541 185.500v80l9-3.500v-78z" fill="#9c9c9c"/><path d="M525 184l6-2.500h13.500l5.500 2.500-9 1.500h-10.500z" fill="#bcbcbc"/>
<path d="M490.4 169.8A93.600 97 0 1 1 575.3 342.4" fill="none" stroke="#d6d200" stroke-width="1.100"/>
<path d="M442.7 261.7C442.9 262.4 443.3 264.6 444.0 266.0C444.7 267.4 445.0 268.4 446.7 270.0C448.3 271.6 451.2 274.0 454.0 275.7C456.8 277.3 459.6 278.5 463.3 280.0C467.1 281.5 472.2 283.3 476.7 284.7C481.1 286.1 483.9 287.2 490.0 288.3C496.1 289.5 505.6 290.9 513.3 291.7C521.1 292.4 530.3 292.5 536.7 292.7C543.1 292.8 546.7 292.8 551.7 292.7C556.7 292.5 561.7 292.2 566.7 291.7C571.7 291.2 576.7 290.5 581.7 289.7C586.7 288.8 592.1 287.8 596.7 286.7C601.3 285.6 605.4 284.4 609.3 283.0C613.2 281.6 617.1 279.8 620.0 278.3C622.9 276.8 625.0 275.4 626.7 274.0C628.3 272.6 629.3 271.3 630.0 270.0C630.7 268.7 630.9 267.1 631.0 266.0C631.1 264.9 630.7 263.8 630.7 263.3" fill="none" stroke="#14d414" stroke-width="1.200"/>
<path d="M536.7 158.3C535.1 159.1 530.1 160.7 527.3 162.7C524.6 164.6 522.4 167.2 520.0 170.0C517.6 172.8 514.9 176.0 512.7 179.3C510.4 182.7 508.8 185.7 506.7 190.0C504.6 194.3 501.9 200.0 500.0 205.0C498.1 210.0 496.3 215.3 495.0 220.0C493.7 224.7 493.1 228.9 492.3 233.3C491.6 237.8 491.1 242.2 490.7 246.7C490.3 251.1 490.1 255.6 490.0 260.0C489.9 264.4 489.9 269.2 490.0 273.3C490.1 277.5 490.2 281.1 490.3 285.0C490.5 288.9 490.7 293.1 491.0 296.7C491.3 300.3 491.6 303.3 492.0 306.7C492.4 310.0 492.6 313.5 493.3 316.7C494.1 319.8 495.2 322.9 496.3 325.7C497.4 328.4 498.7 330.9 500.0 333.3C501.3 335.7 502.6 338.1 504.0 340.0C505.4 341.9 506.6 343.3 508.3 345.0C510.1 346.7 512.4 348.7 514.7 350.0C516.9 351.3 520.5 352.2 521.7 352.7" fill="none" stroke="#f02020" stroke-width="1.200" stroke-dasharray="9 1.500 4 1"/>
<path d="M489.900 272v25" stroke="#ff1a1a" stroke-width="1.800"/>
<text x="683" y="637.500" font-family="Liberation Sans,sans-serif" font-size="5.500" fill="#eee" font-weight="bold">0 fps</text>
</svg>
<div class="a" style="left:707px;top:81px;width:3.5px;height:562px;background:#3c3c3c;"></div>
<div class="a" style="left:710.5px;top:81px;width:134.5px;height:562px;background:#444;"></div>
<svg class="a" style="left:813.0px;top:82.8px" width="9" height="9" viewBox="0 0 9 9"><path d="M4.500 4.500v-4M4.500 4.500l-3.500 3M4.500 4.500l3.500 3" stroke="#ddd" stroke-width="1"/><circle cx="4.500" cy="1" r="1" fill="#3c6"/><circle cx="1.200" cy="7.500" r="1" fill="#e33"/><circle cx="7.800" cy="7.500" r="1" fill="#36e"/></svg>
<svg class="a" style="left:823.8px;top:82.8px" width="9" height="9" viewBox="0 0 9 9"><path d="M1 8a3.800 3.800 0 117 0" fill="none" stroke="#48b4d8" stroke-width="2"/><rect x="3" y="5" width="3" height="3.500" fill="#ddd"/></svg>
<svg class="a" style="left:834.5px;top:82.8px" width="9" height="9" viewBox="0 0 9 9"><path d="M1 8l6-6" stroke="#3fb5c0" stroke-width="1.500"/><path d="M6 .8l2.200 2.200" stroke="#ddd" stroke-width="1.200"/></svg>
<div class="t" style="left:717px;top:93.2px;">Channels</div>
<div class="t" style="left:749px;top:93.2px;">Edit</div>
<div class="t" style="left:767px;top:93.2px;">Object</div>
<div class="t" style="left:792px;top:93.2px;">Show</div>
<div class="t" style="left:713.5px;top:103.2px;color:#fff;font-weight:bold;font-size:5.700px">Cn_default_CONTROL</div>
<div class="t" style="left:742px;top:111.10px;width:60px;text-align:right">Translate X</div>
<div class="a" style="left:805px;top:112.2px;width:38px;height:7.5px;background:#2b2b2b;"></div>
<div class="t" style="left:809.5px;top:111.1px;color:#e8e8e8">0</div>
<div class="t" style="left:742px;top:119.31px;width:60px;text-align:right">Translate Y</div>
<div class="a" style="left:805px;top:120.41px;width:38px;height:7.5px;background:#2b2b2b;"></div>
<div class="t" style="left:809.5px;top:119.31px;color:#e8e8e8">0</div>
<div class="t" style="left:742px;top:127.52px;width:60px;text-align:right">Translate Z</div>
<div class="a" style="left:805px;top:128.62px;width:38px;height:7.5px;background:#2b2b2b;"></div>
<div class="t" style="left:809.5px;top:127.52px;color:#e8e8e8">0</div>
<div class="t" style="left:742px;top:135.73px;width:60px;text-align:right">Rotate X</div>
<div class="a" style="left:805px;top:136.83px;width:38px;height:7.5px;background:#2b2b2b;"></div>
<div class="t" style="left:809.5px;top:135.73px;color:#e8e8e8">0</div>
<div class="t" style="left:742px;top:143.94px;width:60px;text-align:right">Rotate Y</div>
<div class="a" style="left:805px;top:145.04px;width:38px;height:7.5px;background:#2b2b2b;"></div>
<div class="t" style="left:809.5px;top:143.94px;color:#e8e8e8">0</div>
<div class="t" style="left:742px;top:152.15px;width:60px;text-align:right">Rotate Z</div>
<div class="a" style="left:805px;top:153.25px;width:38px;height:7.5px;background:#2b2b2b;"></div>
<div class="t" style="left:809.5px;top:152.15px;color:#e8e8e8">0</div>
<div class="t" style="left:742px;top:160.36px;width:60px;text-align:right">Scale X</div>
<div class="a" style="left:805px;top:161.46px;width:38px;height:7.5px;background:#2b2b2b;"></div>
<div class="t" style="left:809.5px;top:160.36px;color:#e8e8e8">1</div>
<div class="t" style="left:742px;top:168.57px;width:60px;text-align:right">Scale Y</div>
<div class="a" style="left:805px;top:169.67px;width:38px;height:7.5px;background:#2b2b2b;"></div>
<div class="t" style="left:809.5px;top:168.57px;color:#e8e8e8">1</div>
<div class="t" style="left:742px;top:176.78px;width:60px;text-align:right">Scale Z</div>
<div class="a" style="left:805px;top:177.88px;width:38px;height:7.5px;background:#2b2b2b;"></div>
<div class="t" style="left:809.5px;top:176.78px;color:#e8e8e8">1</div>
<div class="t" style="left:742px;top:184.99px;width:60px;text-align:right">Visibility</div>
<div class="a" style="left:805px;top:186.09px;width:38px;height:7.5px;background:#2b2b2b;"></div>
<div class="t" style="left:809.5px;top:184.99px;color:#e8e8e8">on</div>
<div class="a" style="left:713px;top:202.2px;width:130px;height:272.3px;background:#2b2b2b;"></div>
<div class="a" style="left:713px;top:481px;width:130px;height:9.5px;background:#383838;"></div>
<div class="a" style="left:713px;top:481px;width:30.5px;height:9.5px;background:#4a4a4a;"></div>
<div class="t" style="left:718.5px;top:480.8px;color:#f4f4f4">Display</div>
<div class="t" style="left:750px;top:480.8px;color:#8a8a8a">Anim</div>
<div class="t" style="left:718px;top:490.8px;">Layers</div>
<div class="t" style="left:742px;top:490.8px;">Options</div>
<div class="t" style="left:771px;top:490.8px;">Help</div>
<svg class="a" style="left:793.0px;top:503.0px" width="9" height="8" viewBox="0 0 9 8"><path d="M.5 4l4-2.500v5z" fill="#eee"/><rect x="4.800" y="2.300" width="2" height="3.500" fill="#3fb5c0"/></svg>
<svg class="a" style="left:805.0px;top:503.0px" width="9" height="8" viewBox="0 0 9 8"><path d="M.5 4l4-2.500v5z" fill="#eee"/><rect x="4.800" y="2.300" width="2" height="3.500" fill="#3fb5c0"/></svg>
<svg class="a" style="left:818.5px;top:503.0px" width="9" height="8" viewBox="0 0 9 8"><path d="M.5 4.500l4.500-3 3.500 2-4.500 3z" fill="#eee"/><circle cx="7.500" cy="1.800" r="1.300" fill="#3fb5c0"/></svg>
<svg class="a" style="left:830.5px;top:503.0px" width="9" height="8" viewBox="0 0 9 8"><path d="M.5 4.500l4.500-3 3.500 2-4.500 3z" fill="#eee"/><circle cx="7.500" cy="1.800" r="1.300" fill="#3fb5c0"/></svg>
<div class="a" style="left:714.5px;top:514.5px;width:127.5px;height:118px;background:#2b2b2b;"></div>
<div class="a" style="left:714.5px;top:633px;width:127.5px;height:6px;background:#3a3a3a;"></div>
<div class="a" style="left:721px;top:633.8px;width:79px;height:4.3px;background:#5c5c5c;border-radius:2px"></div>
<div class="a" style="left:715.500px;top:633.500px;border:2.500px solid transparent;border-right:3px solid #eee;border-left:0"></div>
<div class="a" style="left:837px;top:633.500px;border:2.500px solid transparent;border-left:3px solid #eee;border-right:0"></div>
<div class="a" style="left:845px;top:81px;width:11.5px;height:562px;background:#474747;"></div>
<div class="a" style="left:845.5px;top:131px;width:10.5px;height:84px;background:#505050;"></div>
<div class="t" style="left:855.500px;top:84px;transform-origin:0 0;transform:rotate(90deg);color:#9a9a9a;letter-spacing:.2px">Attribute Editor</div>
<div class="t" style="left:855.500px;top:139px;transform-origin:0 0;transform:rotate(90deg);color:#f0f0f0;font-weight:bold;font-size:5.600px;letter-spacing:.05px">Channel Box / Layer Editor</div>
<div class="t" style="left:855.500px;top:221px;transform-origin:0 0;transform:rotate(90deg);color:#9a9a9a;letter-spacing:.3px">Modeling Toolkit</div>
<div class="t" style="left:855.500px;top:279px;transform-origin:0 0;transform:rotate(90deg);color:#9a9a9a;letter-spacing:.25px">Tool Settings</div>
<div class="t" style="left:855.500px;top:326px;transform-origin:0 0;transform:rotate(90deg);color:#9a9a9a;letter-spacing:.12px">ngSkinTools 2.0.36</div>
<div class="a" style="left:845px;top:381px;width:11.5px;height:262px;background:#3c3c3c;"></div>
<div class="a" style="left:845.5px;top:130.5px;width:10.5px;height:0.8px;background:#2e2e2e;"></div>
<div class="a" style="left:845.5px;top:215.5px;width:10.5px;height:0.8px;background:#2e2e2e;"></div>
<div class="a" style="left:845.5px;top:273px;width:10.5px;height:0.8px;background:#2e2e2e;"></div>
<div class="a" style="left:845.5px;top:318px;width:10.5px;height:0.8px;background:#2e2e2e;"></div>
<div class="a" style="left:845.5px;top:380px;width:10.5px;height:0.8px;background:#2e2e2e;"></div>
<div class="a" style="left:856.5px;top:81px;width:567.0px;height:562px;background:#444;"></div>
<div class="a" style="left:856.5px;top:81px;width:423.5px;height:9.5px;background:#383838;"></div>
<div class="a" style="left:857.5px;top:82px;width:43px;height:8.5px;background:#4a4a4a;"></div>
<div class="t" style="left:861.5px;top:81.5px;color:#f4f4f4">Script Editor</div>
<div class="t" style="left:860px;top:90.8px;">File</div>
<div class="t" style="left:877.5px;top:90.8px;">Edit</div>
<div class="t" style="left:895px;top:90.8px;">History</div>
<div class="t" style="left:921.5px;top:90.8px;">Command</div>
<div class="t" style="left:956px;top:90.8px;">Help</div>
<svg class="a" style="left:857.8px;top:102.5px" width="10" height="10" viewBox="0 0 10 10"><path d="M.5 8v-6.500h3l1 1.200h4v1.300" fill="none" stroke="#e6e6e6" stroke-width="1"/><path d="M.5 8.500l1.600-4.500h7.400l-1.600 4.500z" fill="#e6e6e6"/></svg>
<svg class="a" style="left:871.9px;top:102.5px" width="10" height="10" viewBox="0 0 10 10"><path d="M.5 8v-6.500h3l1 1.200h4v1.300" fill="none" stroke="#e6e6e6" stroke-width="1"/><path d="M.5 8.500l1.600-4.500h7.400l-1.600 4.500z" fill="#e6e6e6"/><rect x="5" y="5.500" width="4" height="3.500" fill="#3fb5c0"/></svg>
<svg class="a" style="left:885.6px;top:102.5px" width="10" height="10" viewBox="0 0 10 10"><path d="M.5 .5h7.500l1.500 1.500v7.500h-9z" fill="#e6e6e6"/><rect x="2.500" y=".5" width="4.500" height="3" fill="#555"/><rect x="2.500" y="5.500" width="5" height="3.500" fill="#555"/></svg>
<svg class="a" style="left:901.0px;top:102.5px" width="10" height="10" viewBox="0 0 10 10"><path d="M.5 2h6l1.500 1.500v6h-7.500z" fill="#e6e6e6"/><rect x="2" y="6" width="4.500" height="3" fill="#555"/><path d="M5 0l4.500 3-2.500.5z" fill="#3fb5c0"/></svg>
<svg class="a" style="left:917.0px;top:102.5px" width="10" height="10" viewBox="0 0 10 10"><rect x=".5" y="3" width="9" height="6" fill="#3a4a50"/><rect x=".5" y="3" width="9" height="1" fill="#e6e6e6"/><rect x=".5" y="4.800" width="9" height="2.500" fill="#3fb5c0"/><path d="M6 .2l3 3M9 .2l-3 3" stroke="#e6e6e6" stroke-width=".9"/></svg>
<svg class="a" style="left:931.0px;top:102.5px" width="10" height="10" viewBox="0 0 10 10"><rect x=".5" y="2.500" width="9" height="6" fill="#3a4a50"/><rect x=".5" y="2.500" width="9" height="1" fill="#e6e6e6"/><rect x=".5" y="5" width="9" height="2.500" fill="#3fb5c0"/><path d="M6 6.500l3 3M9 6.500l-3 3" stroke="#e6e6e6" stroke-width=".9"/></svg>
<svg class="a" style="left:945.0px;top:102.5px" width="10" height="10" viewBox="0 0 10 10"><rect x=".5" y="1" width="9" height="8" fill="#3a4a50"/><rect x=".5" y="2" width="9" height="2.500" fill="#3fb5c0"/><rect x=".5" y="5.700" width="9" height="2.500" fill="#3fb5c0"/><path d="M.5 1h9M.5 5h9" stroke="#e6e6e6" stroke-width=".7"/><path d="M6 3l3 4M9 3l-3 4" stroke="#e6e6e6" stroke-width=".8"/></svg>
<svg class="a" style="left:962.0px;top:102.5px" width="10" height="10" viewBox="0 0 10 10"><rect x=".5" y="1.500" width="9" height="7.500" fill="#3a4a50"/><rect x=".5" y="1" width="9" height="1.200" fill="#e6e6e6"/><rect x=".5" y="2.800" width="9" height="3" fill="#4fb0c0"/></svg>
<svg class="a" style="left:976.0px;top:102.5px" width="10" height="10" viewBox="0 0 10 10"><rect x=".5" y="2.500" width="9" height="6.500" fill="#3a4a50"/><rect x=".5" y="2.500" width="9" height="1" fill="#e6e6e6"/><rect x=".5" y="5" width="9" height="3.500" fill="#4fb0c0"/></svg>
<svg class="a" style="left:990.0px;top:102.5px" width="10" height="10" viewBox="0 0 10 10"><rect x=".5" y="1" width="9" height="8" fill="#3a4a50"/><rect x=".5" y="1.500" width="9" height="2.800" fill="#4fb0c0"/><rect x=".5" y="5.700" width="9" height="2.800" fill="#4fb0c0"/><path d="M.5 1h9M.5 5h9" stroke="#e6e6e6" stroke-width=".8"/></svg>
<svg class="a" style="left:1007.6px;top:102.5px" width="10" height="10" viewBox="0 0 10 10"><rect x=".5" y="1" width="8" height="6.500" fill="#5aa0c0" stroke="#e6e6e6" stroke-width="1"/><path d="M5 5l4.500 4-2-.2z" fill="#e6e6e6"/><path d="M2 3h5M2 5h3" stroke="#e6e6e6" stroke-width=".7"/></svg>
<div class="a" style="left:1021px;top:101.5px;width:12.5px;height:12px;background:#4a8fc0;border:.8px solid #6ab0e0"></div>
<svg class="a" style="left:1022.2px;top:102.5px" width="10" height="10" viewBox="0 0 10 10"><rect x=".5" y="1.500" width="9" height="7" rx="1.500" fill="none" stroke="#dff" stroke-width="1"/><path d="M2 4h6M2 6h6" stroke="#dff" stroke-width="1"/><ellipse cx="5" cy="1.500" rx="4.500" ry="1.200" fill="none" stroke="#dff" stroke-width=".8"/></svg>
<svg class="a" style="left:1038.8px;top:102.5px" width="10" height="10" viewBox="0 0 10 10"><path d="M1 9l3-3.500v3.500z" fill="#35b8d8"/><path d="M5 4.500l3-3.500v3.500z" fill="#35b8d8"/><path d="M3.500 5.500l2-2" stroke="#35b8d8" stroke-width=".9"/></svg>
<svg class="a" style="left:1052.6px;top:102.5px" width="10" height="10" viewBox="0 0 10 10"><path d="M1.500 .5l7.500 4.500-7.500 4.500z" fill="#35b8d8"/></svg>
<div class="a" style="left:1070.3px;top:103px;width:60.2px;height:8.8px;background:#2b2b2b;"></div>
<svg class="a" style="left:1134.0px;top:102.5px" width="10" height="10" viewBox="0 0 10 10"><circle cx="4" cy="4.500" r="2.800" fill="none" stroke="#3fb5c0" stroke-width="1.200"/><path d="M6 6.500l3 3" stroke="#3fb5c0" stroke-width="1.400"/><path d="M8.500 .5v3.500M7.300 2.800l1.200 1.300 1.200-1.300" stroke="#e6e6e6" stroke-width=".8" fill="none"/></svg>
<svg class="a" style="left:1148.0px;top:102.5px" width="10" height="10" viewBox="0 0 10 10"><circle cx="4" cy="4.500" r="2.800" fill="none" stroke="#3fb5c0" stroke-width="1.200"/><path d="M6 6.500l3 3" stroke="#3fb5c0" stroke-width="1.400"/><path d="M8.500 4v-3.500M7.300 1.700l1.200-1.300 1.200 1.300" stroke="#e6e6e6" stroke-width=".8" fill="none"/></svg>
<div class="a" style="left:1165.3px;top:103px;width:14px;height:8.8px;background:#2b2b2b;"></div>
<svg class="a" style="left:1182.6px;top:102.5px" width="10" height="10" viewBox="0 0 10 10"><path d="M4 2h5.500M4 5h5.500M4 8h5.500" stroke="#e6e6e6" stroke-width="1.100"/><path d="M.5 1v4h2.500" stroke="#3fb5c0" stroke-width="1" fill="none"/><path d="M2 3.500l1.500 1.500-1.500 1.500" stroke="#3fb5c0" stroke-width=".9" fill="none"/></svg>
<div class="a" style="left:914px;top:102.500px;width:.7px;height:10px;background:#5a5a5a"></div>
<div class="a" style="left:958.5px;top:102.500px;width:.7px;height:10px;background:#5a5a5a"></div>
<div class="a" style="left:1003.5px;top:102.500px;width:.7px;height:10px;background:#5a5a5a"></div>
<div class="a" style="left:1035.5px;top:102.500px;width:.7px;height:10px;background:#5a5a5a"></div>
<div class="a" style="left:857px;top:113.6px;width:415px;height:193.4px;background:#2b2b2b;"></div>
<div class="a" style="left:1272px;top:113.6px;width:6px;height:193.4px;background:#444;"></div>
<div class="a" style="left:1272.8px;top:165px;width:4.5px;height:133px;background:#5a5a5a;"></div>
<div class="a" style="left:1272.300px;top:115.500px;border:2.700px solid transparent;border-bottom:3px solid #ddd;border-top:0"></div>
<div class="a" style="left:1272.300px;top:300.500px;border:2.700px solid transparent;border-top:3px solid #ddd;border-bottom:0"></div>
<pre class="a mono" style="left:859px;top:116.16px;font-size:6px;line-height:7.68px;color:#c4c4c4">        self.side = side
        self.part = part
        self.model_path = model_path

        if not self.side:
            self.side = 'Cn'
        if not self.part:
            self.part = 'default'
        self.base_name = self.side + '_' + self.part

    def create_module(self):
        super(RigModule, self).create_module()
        self.part_hierarchy()

    def part_hierarchy(self):
        self.part_grp = self.rig_group(name=self.base_name,
                                       parent=self.rig)
        self.module_grp = self.rig_group(name=self.base_name + '_MODULE',
                                         parent=self.part_grp)
        self.control_grp = self.rig_group(name=self.base_name + '_CONTROL',
                                          parent=self.part_grp)

rig_object = RigModule(model_path='cylinder')
rig_object.create_module()</pre>
<div class="a" style="left:857px;top:307px;width:421px;height:4.5px;background:#444;"></div>
<div class="a" style="left:857px;top:311.5px;width:421px;height:10px;background:#383838;"></div>
<div class="a" style="left:922px;top:312px;width:57px;height:9.5px;background:#4a4a4a;"></div>
<div class="t" style="left:864px;top:311.8px;color:#8a8a8a">MEL</div>
<div class="t" style="left:887px;top:311.8px;color:#8a8a8a">Base Class</div>
<div class="t" style="left:926.6px;top:311.8px;color:#f4f4f4">Single Inheritance</div>
<div class="t" style="left:986px;top:311.8px;color:#8a8a8a">Multiple Inheritance</div>
<div class="t" style="left:1051.5px;top:311.8px;color:#8a8a8a">Hierarchical Inheritance</div>
<div class="t" style="left:1127px;top:311.8px;color:#bbb">+</div>
<div class="a" style="left:881px;top:312px;width:0.8px;height:9px;background:#2e2e2e;"></div>
<div class="a" style="left:922px;top:312px;width:0.8px;height:9px;background:#2e2e2e;"></div>
<div class="a" style="left:979px;top:312px;width:0.8px;height:9px;background:#2e2e2e;"></div>
<div class="a" style="left:1044.5px;top:312px;width:0.8px;height:9px;background:#2e2e2e;"></div>
<div class="a" style="left:1121px;top:312px;width:0.8px;height:9px;background:#2e2e2e;"></div>
<div class="a" style="left:1135px;top:312px;width:0.8px;height:9px;background:#2e2e2e;"></div>
<div class="a" style="left:857px;top:321.8px;width:23px;height:315.7px;background:#444;"></div>
<div class="a" style="left:878.8px;top:321.8px;width:1px;height:315.7px;background:#5c5c5c;"></div>
<div class="a" style="left:880.3px;top:321.8px;width:397.7px;height:315.7px;background:#2b2b2b;"></div>
<div class="a" style="left:881px;top:393.56px;width:91.5px;height:8.33px;background:#5285a8;"></div>
<div class="a" style="left:881px;top:401.38px;width:224.7px;height:8.33px;background:#5285a8;"></div>
<div class="a" style="left:881px;top:409.21px;width:87.9px;height:8.33px;background:#5285a8;"></div>
<div class="a" style="left:881px;top:417.05px;width:87.9px;height:8.33px;background:#5285a8;"></div>
<div class="a" style="left:881px;top:424.88px;width:131.1px;height:8.33px;background:#5285a8;"></div>
<div class="a" style="left:881px;top:432.7px;width:2.0px;height:8.33px;background:#5285a8;"></div>
<div class="a" style="left:881px;top:440.53px;width:91.5px;height:8.33px;background:#5285a8;"></div>
<div class="a" style="left:881px;top:448.36px;width:102.3px;height:8.33px;background:#5285a8;"></div>
<div class="a" style="left:881px;top:456.19px;width:91.5px;height:8.33px;background:#5285a8;"></div>
<div class="a" style="left:881px;top:464.02px;width:120.3px;height:8.33px;background:#5285a8;"></div>
<div class="a" style="left:881px;top:471.85px;width:188.7px;height:8.33px;background:#5285a8;"></div>
<div class="a" style="left:881px;top:479.69px;width:2.0px;height:8.33px;background:#5285a8;"></div>
<div class="a" style="left:881px;top:487.51px;width:102.3px;height:8.33px;background:#5285a8;"></div>
<div class="a" style="left:881px;top:495.34px;width:167.1px;height:8.33px;background:#5285a8;"></div>
<div class="a" style="left:881px;top:503.18px;width:105.9px;height:8.33px;background:#5285a8;"></div>
<div class="a" style="left:881px;top:511.01px;width:2.0px;height:8.33px;background:#5285a8;"></div>
<div class="a" style="left:881px;top:518.84px;width:105.9px;height:8.33px;background:#5285a8;"></div>
<div class="a" style="left:881px;top:526.67px;width:213.9px;height:8.33px;background:#5285a8;"></div>
<div class="a" style="left:881px;top:534.5px;width:199.5px;height:8.33px;background:#5285a8;"></div>
<div class="a" style="left:881px;top:542.33px;width:264.3px;height:8.33px;background:#5285a8;"></div>
<div class="a" style="left:881px;top:550.15px;width:224.7px;height:8.33px;background:#5285a8;"></div>
<div class="a" style="left:881px;top:557.99px;width:271.5px;height:8.33px;background:#5285a8;"></div>
<div class="a" style="left:881px;top:565.82px;width:228.3px;height:8.33px;background:#5285a8;"></div>
<div class="a" style="left:881px;top:573.64px;width:2.0px;height:8.33px;background:#5285a8;"></div>
<div class="a" style="left:881px;top:581.48px;width:163.5px;height:8.33px;background:#5285a8;"></div>
<div class="a" style="left:881px;top:589.31px;width:95.1px;height:8.33px;background:#5285a8;"></div>
<pre class="a mono" style="left:881px;top:324.08px;font-size:6px;line-height:7.83px;color:#c8c8c8"><span style="color:#14ee14">class</span> RigModule(RigBase):
    <span style="color:#14ee14">def</span> __init__(self, model_path=<span style="color:#14ee14">None</span>):
        self.model_path = model_path


rig_object = RigModule(model_path=<span style="color:#e6e600">'cylinder'</span>)
rig_object.create_module()


<span style="color:#e4ecf4"><span style="color:#dfe8f0">class</span> RigModule(RigBase):</span>
<span style="color:#e4ecf4">    <span style="color:#dfe8f0">def</span> __init__(self, side=<span style="color:#dfe8f0">None</span>, part=<span style="color:#dfe8f0">None</span>, model_path=<span style="color:#dfe8f0">None</span>):</span>
<span style="color:#e4ecf4">        self.side = side</span>
<span style="color:#e4ecf4">        self.part = part</span>
<span style="color:#e4ecf4">        self.model_path = model_path</span>
<span style="color:#e4ecf4"></span>
<span style="color:#e4ecf4">        <span style="color:#dfe8f0">if</span> <span style="color:#dfe8f0">not</span> self.side:</span>
<span style="color:#e4ecf4">            self.side = <span style="color:#e4ecf0">'Cn'</span></span>
<span style="color:#e4ecf4">        <span style="color:#dfe8f0">if</span> <span style="color:#dfe8f0">not</span> self.part:</span>
<span style="color:#e4ecf4">            self.part = <span style="color:#e4ecf0">'default'</span></span>
<span style="color:#e4ecf4">        self.base_name = self.side + <span style="color:#e4ecf0">'_'</span> + self.part</span>
<span style="color:#e4ecf4"></span>
<span style="color:#e4ecf4">    <span style="color:#dfe8f0">def</span> create_module(self):</span>
<span style="color:#e4ecf4">        super(RigModule, self).create_module()</span>
<span style="color:#e4ecf4">        self.part_hierarchy()</span>
<span style="color:#e4ecf4"></span>
<span style="color:#e4ecf4">    <span style="color:#dfe8f0">def</span> part_hierarchy(self):</span>
<span style="color:#e4ecf4">        self.part_grp = self.rig_group(name=self.base_name,</span>
<span style="color:#e4ecf4">                                       parent=self.rig)</span>
<span style="color:#e4ecf4">        self.module_grp = self.rig_group(name=self.base_name + <span style="color:#e4ecf0">'_MODULE'</span>,</span>
<span style="color:#e4ecf4">                                         parent=self.part_grp)</span>
<span style="color:#e4ecf4">        self.control_grp = self.rig_group(name=self.base_name + <span style="color:#e4ecf0">'_CONTROL'</span>,</span>
<span style="color:#e4ecf4">                                          parent=self.part_grp)</span>
<span style="color:#e4ecf4"></span>
<span style="color:#e4ecf4">rig_object = RigModule(model_path=<span style="color:#e4ecf0">'cylinder'</span>)</span>
<span style="color:#e4ecf4">rig_object.create_module()</span>
</pre>
<pre class="a mono" style="left:857px;top:324.08px;width:20px;text-align:right;font-size:5.300px;line-height:7.83px;color:#a0a0a0">1
2
3
4
5
6
7
8
9
10
11
12
13
14
15
16
17
18
19
20
21
22
23
24
25
26
27
28
29
30
31
32
33
34
35
36</pre>
<svg class="a" style="left:1033.1px;top:452.3px" width="9" height="22" viewBox="0 0 9 22"><path d="M1 1.500h2.500l1 1 1-1h2.500M1 20.500h2.500l1-1 1 1h2.500M4.500 2.500v17" stroke="#111" stroke-width="3" fill="none" stroke-linecap="square"/><path d="M1 1.500h2.500l1 1 1-1h2.500M1 20.500h2.500l1-1 1 1h2.500M4.500 2.500v17" stroke="#fff" stroke-width="1.200" fill="none"/></svg>
<div class="a" style="left:856.5px;top:637.5px;width:423.5px;height:5.5px;background:#444;"></div>
<div class="a" style="left:2px;top:641.5px;width:1278px;height:78.5px;background:#444;"></div>
<div class="a" style="left:2px;top:641.8px;width:1278px;height:4.5px;background:#3c3c3c;"></div>
<div class="a" style="left:25px;top:640.8px;width:281px;height:1px;background:#555;"></div>
<div class="a" style="left:309px;top:640.8px;width:398px;height:1px;background:#555;"></div>
<div class="a" style="left:711px;top:640.8px;width:132.5px;height:1px;background:#555;"></div>
<div class="a" style="left:856.5px;top:640.8px;width:421.5px;height:1px;background:#555;"></div>
<div class="a" style="left:856.5px;top:322px;width:1px;height:319px;background:#555;"></div>
<div class="a" style="left:711px;top:480px;width:1px;height:161px;background:#505050;"></div>
<div class="a" style="left:843px;top:480px;width:1px;height:161px;background:#505050;"></div>
<div class="a" style="left:9px;top:646.3px;width:1118.5px;height:21.7px;background:#2d2d2d;"></div>
<div class="a" style="left:15px;top:646.3px;width:8px;height:21.7px;background:#5c5c5c;"></div>
<div class="t" style="left:16.5px;top:659px;color:#f0f0f0;font-size:5.500px">1</div>
<svg class="a" style="left:0;top:640px" width="1130" height="30" viewBox="0 640 1130 30"><path d="M23.4 653v15M41.9 653v15M60.3 653v15M78.8 653v15M97.2 653v15M115.7 653v15M134.1 653v15M152.6 653v15M171.0 653v15M189.5 653v15M207.9 653v15M226.4 653v15M244.8 653v15M263.3 653v15M281.7 653v15M300.2 653v15M318.6 653v15M337.1 653v15M355.6 653v15M374.0 653v15M392.5 653v15M410.9 653v15M429.4 653v15M447.8 653v15M466.3 653v15M484.7 653v15M503.2 653v15M521.6 653v15M540.1 653v15M558.5 653v15M577.0 653v15M595.4 653v15M613.9 653v15M632.3 653v15M650.8 653v15M669.3 653v15M687.7 653v15M706.2 653v15M724.6 653v15M743.1 653v15M761.5 653v15M780.0 653v15M798.4 653v15M816.9 653v15M835.3 653v15M853.8 653v15M872.2 653v15M890.7 653v15M909.1 653v15M927.6 653v15M946.0 653v15M964.5 653v15M983.0 653v15M1001.4 653v15M1019.9 653v15M1038.3 653v15M1056.8 653v15M1075.2 653v15M1093.7 653v15M1112.1 653v15" stroke="#9c9c9c" stroke-width="1"/><g font-family="Liberation Sans,sans-serif" font-size="5.400" fill="#727272"><text x="25.6" y="651.700">2</text><text x="44.1" y="651.700">4</text><text x="62.5" y="651.700">6</text><text x="81.0" y="651.700">8</text><text x="99.4" y="651.700">10</text><text x="117.9" y="651.700">12</text><text x="136.3" y="651.700">14</text><text x="154.8" y="651.700">16</text><text x="173.2" y="651.700">18</text><text x="191.7" y="651.700">20</text><text x="210.1" y="651.700">22</text><text x="228.6" y="651.700">24</text><text x="247.0" y="651.700">26</text><text x="265.5" y="651.700">28</text><text x="283.9" y="651.700">30</text><text x="302.4" y="651.700">32</text><text x="320.8" y="651.700">34</text><text x="339.3" y="651.700">36</text><text x="357.8" y="651.700">38</text><text x="376.2" y="651.700">40</text><text x="394.7" y="651.700">42</text><text x="413.1" y="651.700">44</text><text x="431.6" y="651.700">46</text><text x="450.0" y="651.700">48</text><text x="468.5" y="651.700">50</text><text x="486.9" y="651.700">52</text><text x="505.4" y="651.700">54</text><text x="523.8" y="651.700">56</text><text x="542.3" y="651.700">58</text><text x="560.7" y="651.700">60</text><text x="579.2" y="651.700">62</text><text x="597.6" y="651.700">64</text><text x="616.1" y="651.700">66</text><text x="634.5" y="651.700">68</text><text x="653.0" y="651.700">70</text><text x="671.5" y="651.700">72</text><text x="689.9" y="651.700">74</text><text x="708.4" y="651.700">76</text><text x="726.8" y="651.700">78</text><text x="745.3" y="651.700">80</text><text x="763.7" y="651.700">82</text><text x="782.2" y="651.700">84</text><text x="800.6" y="651.700">86</text><text x="819.1" y="651.700">88</text><text x="837.5" y="651.700">90</text><text x="856.0" y="651.700">92</text><text x="874.4" y="651.700">94</text><text x="892.9" y="651.700">96</text><text x="911.3" y="651.700">98</text><text x="929.8" y="651.700">100</text><text x="948.2" y="651.700">102</text><text x="966.7" y="651.700">104</text><text x="985.2" y="651.700">106</text><text x="1003.6" y="651.700">108</text><text x="1022.1" y="651.700">110</text><text x="1040.5" y="651.700">112</text><text x="1059.0" y="651.700">114</text><text x="1077.4" y="651.700">116</text><text x="1095.9" y="651.700">118</text><text x="1114.3" y="651.700">120</text></g></svg>
<div class="a" style="left:1131.5px;top:649px;width:45px;height:8px;background:#2b2b2b;"></div>
<div class="t" style="left:1134.5px;top:648px;color:#e8602a;font-size:5.500px">1</div>
<svg class="a" style="left:1180.9px;top:648.9px" width="9" height="9" viewBox="0 0 9 9"><path d="M.5 1v7M5 1.200l-3.500 3.300 3.500 3.300zM8.800 1.200l-3.500 3.300 3.500 3.300z" fill="#e0e0e0" stroke="#e0e0e0" stroke-width=".8"/></svg>
<svg class="a" style="left:1193.1px;top:648.9px" width="9" height="9" viewBox="0 0 9 9"><path d="M1.500 1v7" stroke="#e0e0e0" stroke-width="1.100"/><path d="M7.500 1.200l-4.500 3.300 4.500 3.300z" fill="#e0e0e0"/></svg>
<svg class="a" style="left:1205.3px;top:648.9px" width="9" height="9" viewBox="0 0 9 9"><path d="M1.500 .5v8" stroke="#e8702a" stroke-width="1.200"/><path d="M7.800 1.200l-4.500 3.300 4.500 3.300z" fill="#e0e0e0"/></svg>
<svg class="a" style="left:1217.1px;top:648.9px" width="9" height="9" viewBox="0 0 9 9"><path d="M7.500 .8l-6 3.700 6 3.700z" fill="#e0e0e0"/></svg>
<svg class="a" style="left:1228.4px;top:648.9px" width="9" height="9" viewBox="0 0 9 9"><path d="M1.500 .5l6.500 4-6.500 4z" fill="#e8e8e8"/></svg>
<svg class="a" style="left:1240.9px;top:648.9px" width="9" height="9" viewBox="0 0 9 9"><path d="M7.500 .5v8" stroke="#e8702a" stroke-width="1.200"/><path d="M1.200 1.200l4.500 3.300-4.500 3.300z" fill="#e0e0e0"/></svg>
<svg class="a" style="left:1252.2px;top:648.9px" width="9" height="9" viewBox="0 0 9 9"><path d="M7.500 1v7" stroke="#e0e0e0" stroke-width="1.100"/><path d="M1.500 1.200l4.500 3.300-4.500 3.300z" fill="#e0e0e0"/></svg>
<svg class="a" style="left:1264.0px;top:648.9px" width="9" height="9" viewBox="0 0 9 9"><path d="M8.500 1v7M4 1.200l3.500 3.300-3.500 3.300zM.2 1.200l3.500 3.300-3.500 3.300z" fill="#e0e0e0" stroke="#e0e0e0" stroke-width=".8"/></svg>
<div class="a" style="left:9.4px;top:673.5px;width:45px;height:12.2px;background:#2b2b2b;border-radius:1.500px"></div>
<div class="t" style="left:12.5px;top:674.6px;color:#8fd08f">1</div>
<div class="a" style="left:59px;top:673.5px;width:45px;height:12.2px;background:#2b2b2b;border-radius:1.500px"></div>
<div class="t" style="left:62.5px;top:674.6px;color:#8fd08f">1</div>
<div class="a" style="left:108px;top:672.5px;width:760px;height:14px;background:#3b3b3b;"></div>
<div class="a" style="left:111.5px;top:674.8px;width:457px;height:9.4px;background:#6a6a6a;border-radius:1px"></div>
<div class="a" style="left:112.8px;top:676px;width:8px;height:7px;background:#b4b4b4;border-radius:1.500px"></div>
<div class="a" style="left:559.5px;top:676px;width:8px;height:7px;background:#b4b4b4;border-radius:1.500px"></div>
<div class="t" style="left:123.5px;top:674.6px;color:#e8e8e8;font-size:5.500px">1</div>
<div class="t" style="left:547.5px;top:674.6px;color:#e8e8e8;font-size:5.500px">120</div>
<div class="a" style="left:872.5px;top:673.5px;width:47px;height:12.2px;background:#2b2b2b;"></div>
<div class="t" style="left:876px;top:674.6px;color:#ddd">120</div>
<div class="a" style="left:924px;top:673.5px;width:44.5px;height:12.2px;background:#2b2b2b;"></div>
<div class="t" style="left:927.5px;top:674.6px;color:#ddd">200</div>
<div class="a" style="left:971px;top:675px;width:1px;height:9px;background:#777;"></div>
<svg class="a" style="left:978.0px;top:673.7px" width="11" height="12" viewBox="0 0 11 12"><path d="M2.500 .7h-2v10.600h2M8.500 .7h2v10.600h-2" fill="none" stroke="#2fc02f" stroke-width="1"/><path d="M3.500 2.500h3.500l-1 3 1.500 4h-1.500l-1-2.500-1 2.500h-1.300l1.300-4z" fill="#e8703a"/><path d="M7.500 2l1.500 1.500" stroke="#fff" stroke-width=".8"/></svg>
<div class="a" style="left:994px;top:675px;width:1px;height:9px;background:#777;"></div>
<div class="a" style="left:1001.5px;top:678.5px;border:2px solid transparent;border-top:2.5px solid #6a6a6a;border-bottom:0"></div>
<div class="a" style="left:1010px;top:674px;width:52px;height:11.5px;background:#3a3a3a;"></div>
<div class="t" style="left:1014px;top:674.7px;color:#ddd">No Character Set</div>
<div class="a" style="left:1068px;top:678.5px;border:2px solid transparent;border-top:2.5px solid #6a6a6a;border-bottom:0"></div>
<div class="a" style="left:1078.5px;top:674px;width:50px;height:11.5px;background:#3a3a3a;"></div>
<div class="t" style="left:1081.5px;top:674.7px;color:#ddd">No Anim Layer</div>
<div class="a" style="left:1134.5px;top:675px;width:1px;height:9px;background:#777;"></div>
<div class="a" style="left:1138.5px;top:674px;width:51.5px;height:11.5px;background:#585858;"></div>
<div class="t" style="left:1144px;top:674.7px;color:#ddd">24 fps</div>
<div class="a" style="left:1182.5px;top:678.25px;border:2.5px solid transparent;border-top:3.0px solid #ddd;border-bottom:0"></div>
<svg class="a" style="left:1196.7px;top:675.7px" width="10" height="8" viewBox="0 0 10 8"><path d="M2.500 2h5a2 2 0 010 4h-1M7.500 6h-5a2 2 0 010-4h1" fill="none" stroke="#e0e0e0" stroke-width="1.100"/></svg>
<svg class="a" style="left:1211.7px;top:674.7px" width="10" height="10" viewBox="0 0 10 10"><rect x=".5" y="3" width="8" height="6" fill="#e8e8e8"/><rect x=".5" y="1" width="8" height="2" fill="#e8703a"/><path d="M2 5h5M2 7h5" stroke="#e8703a" stroke-width=".8"/><path d="M7 1l2.500-1v2.500" fill="#e8703a"/></svg>
<div class="a" style="left:1228.5px;top:675px;width:1px;height:9px;background:#777;"></div>
<svg class="a" style="left:1233.3px;top:673.2px" width="13" height="13" viewBox="0 0 13 13"><path d="M2.500 .7h-2v11.600h2M10.500 .7h2v11.600h-2" fill="none" stroke="#2fc02f" stroke-width="1"/><path d="M3 5h2l2.500-2v7l-2.500-2h-2z" fill="#e8e8e8"/><path d="M8.500 5l1.500 1.500-1.500 1.500" stroke="#ccc" stroke-width=".7" fill="none"/></svg>
<svg class="a" style="left:1248.9px;top:674.7px" width="10" height="10" viewBox="0 0 10 10"><circle cx="5" cy="5" r="3.800" fill="none" stroke="#bbb" stroke-width=".9" stroke-dasharray="3 1.200"/><path d="M5 3v2.200l1.500 1" stroke="#ddd" stroke-width=".8" fill="none"/></svg>
<svg class="a" style="left:1264.3px;top:674.7px" width="10" height="10" viewBox="0 0 10 10"><circle cx="3" cy="2" r="1.500" fill="none" stroke="#ddd" stroke-width=".9"/><path d="M4 3.500l2 2M5.500 3l3-1-1.500 3 2 3.500h-1.500l-1.500-2.500-2 2.500h-1.500l2.500-3.500z" fill="#e8803a"/></svg>
<div class="t" style="left:14.6px;top:693px;color:#e8e8e8">MEL</div>
<div class="a" style="left:33px;top:692.3px;width:447px;height:10.7px;background:#2b2b2b;"></div>
<div class="a" style="left:484px;top:692.3px;width:777px;height:10.7px;background:#2b2b2b;"></div>
<svg class="a" style="left:1265.3px;top:693.5px" width="9" height="9" viewBox="0 0 9 9"><rect x=".5" y=".5" width="8" height="8" fill="none" stroke="#ddd" stroke-width="1"/><path d="M.5 2.500h8M3 2.500v6M6 2.500v6M.5 5.500h8" stroke="#ddd" stroke-width=".7"/></svg>
<div class="a" style="left:2px;top:706px;width:1278px;height:1px;background:#3a3a3a;"></div>
<div class="t" style="left:14.5px;top:708.4px;color:#cfcfcf;font-size:5.120px">Rotate Tool: Use manipulator to rotate object(s). Shift+drag manipulator axis or plane handles to extrude components or clone objects. Ctrl+Shift+LMB+drag to constrain rotation to connected edges. Use D or INSERT to change the pivot position and axis orientation.</div>
<svg class="a" style="left:1050px;top:645px" width="230" height="66" viewBox="1050 645 230 66" font-family="Liberation Sans,sans-serif" font-weight="bold" fill="none" stroke="rgba(255,255,255,.105)" stroke-linejoin="round"><text x="1132" y="681" font-size="31.500" textLength="133" lengthAdjust="spacingAndGlyphs" stroke-width="2.400">GNOMON</text><text x="1122" y="704.700" font-size="23" textLength="152" lengthAdjust="spacingAndGlyphs" stroke-width="2.200">WORKSHOP</text><text transform="translate(1127.500 668) rotate(-90)" font-size="8" textLength="18" lengthAdjust="spacingAndGlyphs" stroke-width=".8" fill="rgba(255,255,255,.1)">THE</text><path d="M1110 657c-8 10-18 20-30 27-6 3-14 5-20 5 4 3 9 4 13 3-1 4 1 8 5 10 4 2 9 2 13 0 5-2 8-6 9-10 3 1 7 0 9-2-4 0-8-2-9-5 5-7 9-17 10-28z" fill="rgba(255,255,255,.09)" stroke="none"/></svg>
<div class="a" style="left:27.3px;top:229.8px;width:359.6px;height:410.5px;background:#2b2c2c;border-top-right-radius:9px;box-shadow:7px 6px 13px 0 rgba(0,0,0,.55),1px 0 0 rgba(0,0,0,.3)"></div>
<pre class="a pc" style="left:72.500px;top:229.59px;font-size:6.9px;line-height:11.43px;color:#a9b7c6"><span style="color:#cc7832">class</span> RigModule(<span style="text-decoration:underline wavy #a83c3a .4px;text-underline-offset:1px">RigBase</span>):
    <span style="color:#cc7832">def</span> <span style="color:#b200b2">__init__</span>(<span style="color:#94558d">self</span><span style="color:#cc7832">,</span> model_path=<span style="color:#cc7832">None</span>):
        <span style="color:#94558d">self</span>.model_path = model_path


rig_object = RigModule(<span style="color:#aa4926">model_path</span>=<span style="color:#6a8759">'cylinder'</span>)
rig_object.create_module()



<span style="color:#cc7832">class</span> RigModule(<span style="text-decoration:underline wavy #a83c3a .4px;text-underline-offset:1px">RigBase</span>):
    <span style="color:#cc7832">def</span> <span style="color:#b200b2">__init__</span>(<span style="color:#94558d">self</span><span style="color:#cc7832">,</span> side=<span style="color:#cc7832">None</span><span style="color:#cc7832">,</span> part=<span style="color:#cc7832">None</span><span style="color:#cc7832">,</span> model_path=<span style="color:#cc7832">None</span>):
        <span style="color:#94558d">self</span>.side = side
        <span style="color:#94558d">self</span>.part = part
        <span style="color:#94558d">self</span>.model_path = model_path

        <span style="color:#cc7832">if</span> <span style="color:#cc7832">not</span> <span style="color:#94558d">self</span>.side:
            <span style="color:#94558d">self</span>.side = <span style="color:#6a8759">'Cn'</span>
        <span style="color:#cc7832">if</span> <span style="color:#cc7832">not</span> <span style="color:#94558d">self</span>.part:
            <span style="color:#94558d">self</span>.part = <span style="color:#6a8759">'default'</span>
        <span style="color:#94558d">self</span>.base_name = <span style="color:#94558d">self</span>.side + <span style="color:#6a8759">'_'</span> + <span style="color:#94558d">self</span>.part

    <span style="color:#cc7832">def</span> <span style="color:#ffc66d">create_module</span>(<span style="color:#94558d">self</span>):
        <span style="color:#8888c6">super</span>().create_module()
        <span style="color:#94558d">self</span>.part_hierarchy()

    <span style="color:#cc7832">def</span> <span style="color:#ffc66d">part_hierarchy</span>(<span style="color:#94558d">self</span>):
        <span style="color:#94558d">self</span>.part_grp = <span style="color:#94558d">self</span>.rig_group(<span style="color:#aa4926">name</span>=<span style="color:#94558d">self</span>.base_name<span style="color:#cc7832">,</span>
                                       <span style="color:#aa4926">parent</span>=<span style="color:#94558d">self</span>.rig)
        <span style="color:#94558d">self</span>.module_grp = <span style="color:#94558d">self</span>.rig_group(<span style="color:#aa4926">name</span>=<span style="color:#94558d">self</span>.base_name + <span style="color:#6a8759">'_MODULE'</span><span style="color:#cc7832">,</span>
                                         <span style="color:#aa4926">parent</span>=<span style="color:#94558d">self</span>.part_grp)
        <span style="color:#94558d">self</span>.control_grp = <span style="color:#94558d">self</span>.rig_group(<span style="color:#aa4926">name</span>=<span style="color:#94558d">self</span>.base_name + <span style="color:#6a8759">'_CONTROL'</span><span style="color:#cc7832">,</span>
                                          <span style="color:#aa4926">parent</span>=<span style="color:#94558d">self</span>.part_grp)

rig_object = RigModule(<span style="color:#aa4926">model_path</span>=<span style="color:#6a8759">'cylinder'</span>)
rig_object.create_module()</pre>
<pre class="a pc" style="left:27px;top:229.59px;width:14.500px;text-align:right;font-size:6.9px;line-height:11.43px;color:#54585c">1
2
3
4
5
6
7
8
9
10
11
12
13
14
15
16
17
18
19
20
21
22
23
24
25
26
27
28
29
30
31
32
33
34
35
36</pre>
<div class="a" style="left:105.69200000000001px;top:546.61px;width:53.9px;height:0.6px;background:#6f7468;"></div>
<div class="a" style="left:105.69200000000001px;top:569.47px;width:62.2px;height:0.6px;background:#6f7468;"></div>
<div class="a" style="left:105.69200000000001px;top:592.33px;width:66.4px;height:0.6px;background:#6f7468;"></div>
<div class="a" style="left:70px;top:230.8px;width:0.6px;height:408.5px;background:#4a4a4a;"></div>
<div class="a" style="left:68.200px;top:231.80px;width:4px;height:4.500px;border:.6px solid #6a6a6a;background:#2b2c2c;border-radius:1px"></div>
<div class="a" style="left:68.200px;top:243.23px;width:4px;height:4.500px;border:.6px solid #6a6a6a;background:#2b2c2c;border-radius:1px"></div>
<div class="a" style="left:68.200px;top:254.66px;width:4px;height:4.500px;border:.6px solid #6a6a6a;background:#2b2c2c;border-radius:1px"></div>
<div class="a" style="left:68.200px;top:346.10px;width:4px;height:4.500px;border:.6px solid #6a6a6a;background:#2b2c2c;border-radius:1px"></div>
<div class="a" style="left:68.200px;top:357.53px;width:4px;height:4.500px;border:.6px solid #6a6a6a;background:#2b2c2c;border-radius:1px"></div>
<div class="a" style="left:68.200px;top:460.40px;width:4px;height:4.500px;border:.6px solid #6a6a6a;background:#2b2c2c;border-radius:1px"></div>
<div class="a" style="left:68.200px;top:483.26px;width:4px;height:4.500px;border:.6px solid #6a6a6a;background:#2b2c2c;border-radius:1px"></div>
<div class="a" style="left:68.200px;top:506.12px;width:4px;height:4.500px;border:.6px solid #6a6a6a;background:#2b2c2c;border-radius:1px"></div>
<div class="a" style="left:68.200px;top:528.98px;width:4px;height:4.500px;border:.6px solid #6a6a6a;background:#2b2c2c;border-radius:1px"></div>
<div class="a" style="left:68.200px;top:597.56px;width:4px;height:4.500px;border:.6px solid #6a6a6a;background:#2b2c2c;border-radius:1px"></div>
<svg class="a" style="left:54.0px;top:344.8px" width="7" height="7" viewBox="0 0 7 7"><circle cx="2.800" cy="3.300" r="2" fill="none" stroke="#3a9ad0" stroke-width="1.100"/><path d="M5.800 1v5M4.800 5l1 1.300 1-1.300" stroke="#d0d0d0" stroke-width=".8" fill="none"/></svg>
<svg class="a" style="left:54.0px;top:356.2px" width="7" height="7" viewBox="0 0 7 7"><circle cx="2.800" cy="3.300" r="2" fill="none" stroke="#3a9ad0" stroke-width="1.100"/><path d="M5.800 1v5M4.800 5l1 1.300 1-1.300" stroke="#d0d0d0" stroke-width=".8" fill="none"/></svg>
<svg class="a" style="left:54.0px;top:482.0px" width="7" height="7" viewBox="0 0 7 7"><circle cx="2.800" cy="3.300" r="2" fill="none" stroke="#3a9ad0" stroke-width="1.100"/><path d="M5.800 1v5M4.800 5l1 1.300 1-1.300" stroke="#d0d0d0" stroke-width=".8" fill="none"/></svg>
<div class="a" style="left:88.296px;top:251.15px;width:0.5px;height:11.43px;background:#3a3a3a;"></div>
<div class="a" style="left:88.296px;top:365.44px;width:0.5px;height:240.03px;background:#3a3a3a;"></div>
<div class="a" style="left:106.19200000000001px;top:422.6px;width:0.5px;height:11.43px;background:#3a3a3a;"></div>
<div class="a" style="left:106.19200000000001px;top:445.45px;width:0.5px;height:11.43px;background:#3a3a3a;"></div>
<div class="a" style="left:29.500px;top:632.500px;border:2px solid transparent;border-right:2.500px solid #ccc;border-left:0"></div>
<svg class="a" style="left:380px;top:330px" width="340" height="330" viewBox="380 330 340 330">
<defs>
<clipPath id="po"><rect x="-165.34412140033243" y="-72" width="330.68824280066485" height="144" rx="72"/></clipPath>
<clipPath id="pi"><rect x="-99.1" y="-40.5" width="197.7" height="80" rx="40"/></clipPath>
<linearGradient id="tg" x1="0" y1="0" x2="1" y2="0"><stop offset="0" stop-color="#5a90c0"/><stop offset=".45" stop-color="#9ab4a0"/><stop offset="1" stop-color="#f0e070"/></linearGradient>
<linearGradient id="tg2" x1="0" y1="0" x2="1" y2="0"><stop offset="0" stop-color="#3f9fe0"/><stop offset=".5" stop-color="#9fd0b0"/><stop offset="1" stop-color="#f5e860"/></linearGradient>
</defs>
<g transform="translate(553.8 501.2) rotate(-44.35)">
<g clip-path="url(#po)"><rect x="-165.34412140033243" y="-72" width="165.34412140033243" height="144" fill="#ffd95c"/><rect x="0" y="-72" width="165.34412140033243" height="144" fill="#4a8fc8"/>
<path d="M0 -16.5h72.7a40 40 0 0 1 0 80h-72.7z" fill="#000" opacity=".085"/>
<rect x="-107.1" y="-47.5" width="106.9" height="94" rx="47" fill="#ffe678" opacity=".55"/>
</g>
<rect x="-165.34412140033243" y="-72" width="330.68824280066485" height="144" rx="72" fill="none" stroke="#0c0c0c" stroke-width="2.700"/>
<path d="M53.3 -44.500h46l4 4v7h-50z" fill="#9dcdf3"/><path d="M91.3 -44.500h8l4 4v7h-12z" fill="#c4e2fb"/>
<g clip-path="url(#pi)"><rect x="-99.1" y="-40.5" width="99.1" height="80" fill="#fff04a"/><rect x="0" y="-40.5" width="98.7" height="80" fill="#2b97e0"/>
<path d="M0 0h52a17 17 0 0 1 0 34h-52z" fill="#2580d0"/>
</g>
<rect x="-99.1" y="-40.5" width="197.7" height="80" rx="40" fill="none" stroke="#0c0c0c" stroke-width="1.800"/>
<path d="M-42 -21h100" stroke="#fff" stroke-width="7" stroke-linecap="round" opacity=".6"/><path d="M54 -21h4" stroke="#fff" stroke-width="7" stroke-linecap="round" opacity=".35"/>
</g>
<g transform="translate(428.5 496.5) rotate(-42.8)"><text x="0" y="0" font-family="Liberation Sans,sans-serif" font-weight="bold" font-size="30" textLength="169.1" lengthAdjust="spacingAndGlyphs" stroke-linejoin="round" fill="#16202a" stroke="#16202a" stroke-width="4.2">RigModule</text><text x="0" y="0" font-family="Liberation Sans,sans-serif" font-weight="bold" font-size="30" textLength="169.1" lengthAdjust="spacingAndGlyphs" stroke-linejoin="round" fill="url(#tg)" stroke="url(#tg)" stroke-width="1.8">RigModule</text></g>
<g transform="translate(490 486.5) rotate(-43.1)"><text x="0" y="0" font-family="Liberation Sans,sans-serif" font-weight="bold" font-size="16" textLength="76.1" lengthAdjust="spacingAndGlyphs" stroke-linejoin="round" fill="#16202a" stroke="#16202a" stroke-width="2.9000000000000004">RigBase</text><text x="0" y="0" font-family="Liberation Sans,sans-serif" font-weight="bold" font-size="16" textLength="76.1" lengthAdjust="spacingAndGlyphs" stroke-linejoin="round" fill="url(#tg2)" stroke="url(#tg2)" stroke-width="1.1">RigBase</text></g>
</svg>
</body>
</html>
